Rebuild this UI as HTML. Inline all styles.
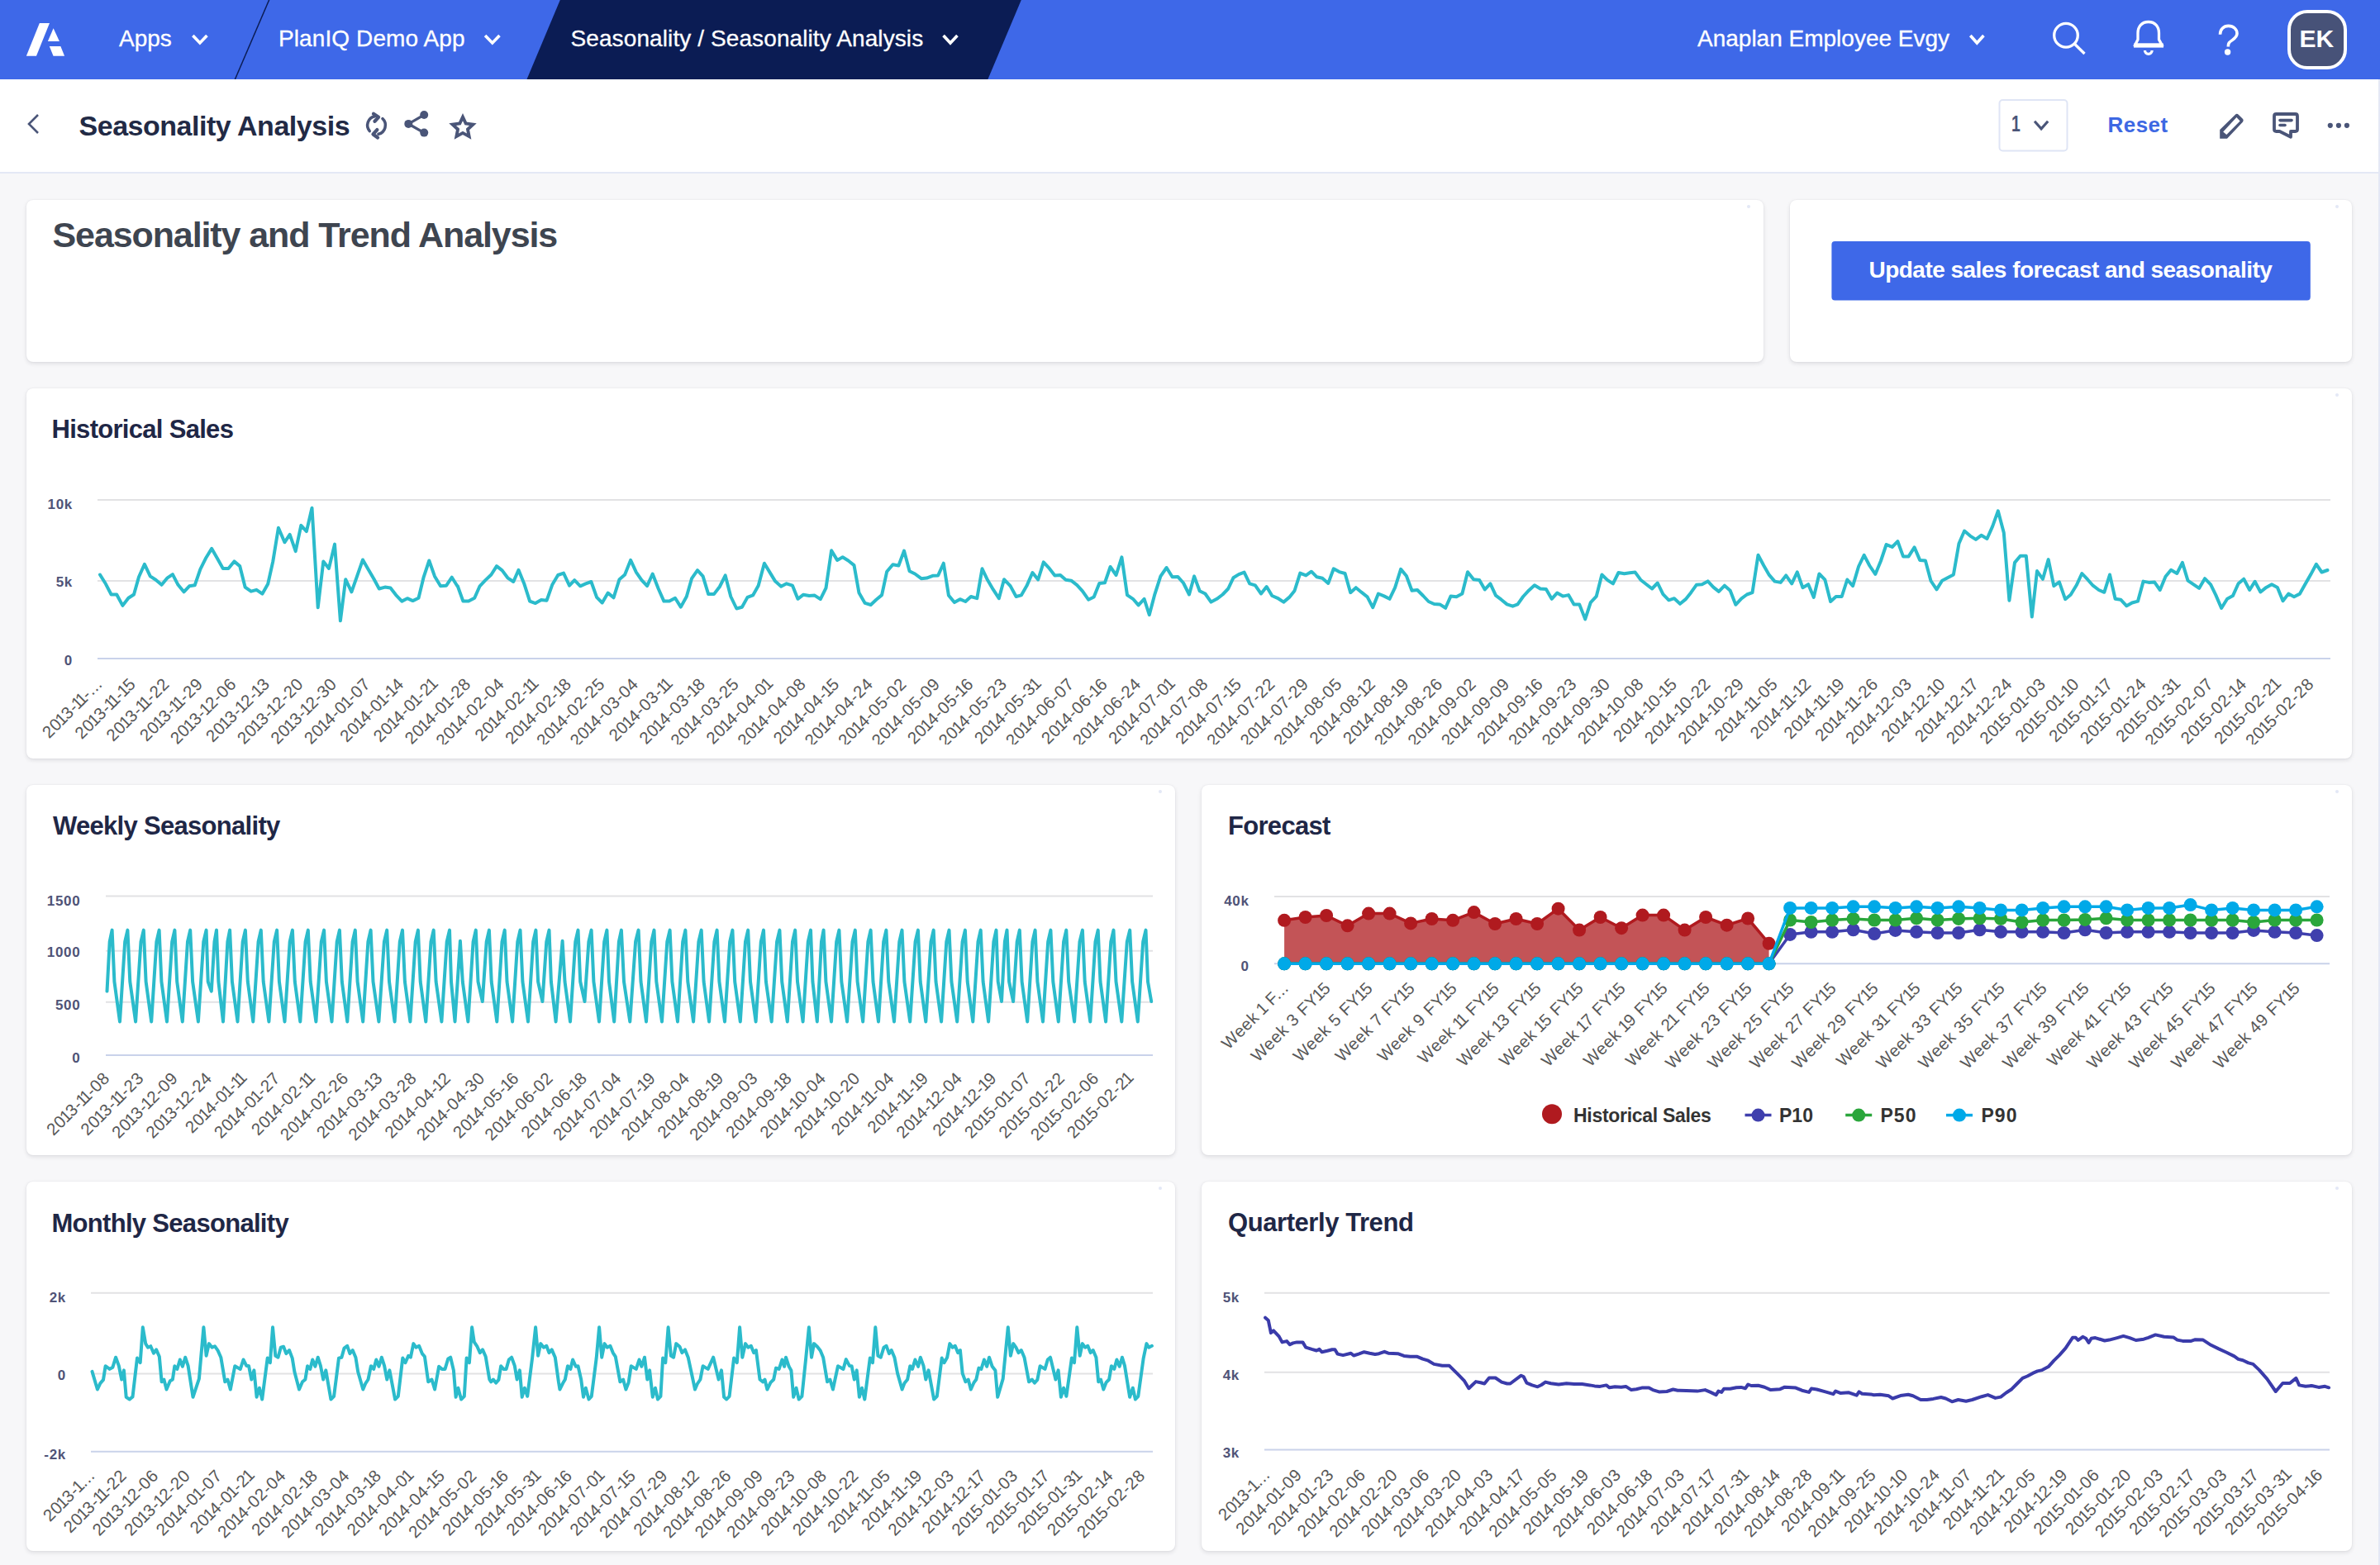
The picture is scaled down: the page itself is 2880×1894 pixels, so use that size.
<!DOCTYPE html><html><head><meta charset="utf-8"><style>
html,body{margin:0;padding:0}
body{width:2880px;height:1894px;overflow:hidden;position:relative;background:#F7F7F9;font-family:"Liberation Sans", sans-serif}
.card{position:absolute;background:#fff;border-radius:8px;box-shadow:0 2px 5px rgba(30,32,50,0.12),0 0 2px rgba(30,32,50,0.07)}
.dot{position:absolute;width:4.4px;height:4.4px;border-radius:50%;background:#E3E8F6}
</style></head><body>
<div style="position:absolute;left:0;top:0;width:2880px;height:96px;background:#3E68E8"></div>
<div style="position:absolute;left:0;top:96px;width:2880px;height:112px;background:#fff;border-bottom:2px solid #E4E8F5"></div>
<div style="position:absolute;left:2878px;top:96px;width:2px;height:1798px;background:#E4E8F5"></div>
<div class="card" style="left:32px;top:242px;width:2102px;height:196px"></div>
<div class="dot" style="left:2113.5px;top:247.5px"></div>
<div class="card" style="left:2166px;top:242px;width:680px;height:196px"></div>
<div class="dot" style="left:2825.5px;top:247.5px"></div>
<div class="card" style="left:32px;top:470px;width:2814px;height:448px"></div>
<div class="dot" style="left:2825.5px;top:475.5px"></div>
<div class="card" style="left:32px;top:950px;width:1390px;height:448px"></div>
<div class="dot" style="left:1401.5px;top:955.5px"></div>
<div class="card" style="left:1454px;top:950px;width:1392px;height:448px"></div>
<div class="dot" style="left:2825.5px;top:955.5px"></div>
<div class="card" style="left:32px;top:1430px;width:1390px;height:447px"></div>
<div class="dot" style="left:1401.5px;top:1435.5px"></div>
<div class="card" style="left:1454px;top:1430px;width:1392px;height:447px"></div>
<div class="dot" style="left:2825.5px;top:1435.5px"></div>
<svg style="position:absolute;left:0;top:0" width="2880" height="1894" viewBox="0 0 2880 1894"><g fill="#fff"><polygon points="31.85,67.87 43.98,67.87 59.97,28.01 47.85,28.01"/><polygon points="64.65,34.24 57.86,49.88 71.92,49.88"/><polygon points="59.8,55.92 73.33,55.92 78.08,67.87 64.54,67.87"/></g><polygon points="324.8,0 326.4,0 285.2,96 283.6,96" fill="#0B1C54"/><polygon points="677.8,0 1235.8,0 1195.4,96 637.5,96" fill="#0B1C54"/><polyline points="234.6,44.3 241.9,52.0 249.2,44.3" fill="none" stroke="#fff" stroke-width="3.6" stroke-linecap="square" stroke-linejoin="miter"/><polyline points="588.3,44.3 595.8,52.0 603.2,44.3" fill="none" stroke="#fff" stroke-width="3.6" stroke-linecap="square" stroke-linejoin="miter"/><polyline points="1142.8,44.3 1150.0,52.0 1157.2,44.3" fill="none" stroke="#fff" stroke-width="3.6" stroke-linecap="square" stroke-linejoin="miter"/><polyline points="2385.5,44.3 2392.3,52.0 2399.2,44.3" fill="none" stroke="#fff" stroke-width="3.6" stroke-linecap="square" stroke-linejoin="miter"/><circle cx="2500" cy="42.75" r="14.3" fill="none" stroke="#fff" stroke-width="3.3"/><line x1="2510.5" y1="53.3" x2="2522.5" y2="65" stroke="#fff" stroke-width="3.3"/><path d="M2599.75,26.5 C2591.5,26.5 2587,32.5 2587,40 L2587,47.8 L2583.8,54.2 L2615.9,54.2 L2612.5,47.8 L2612.5,40 C2612.5,32.5 2608,26.5 2599.75,26.5 Z" fill="none" stroke="#fff" stroke-width="3.3" stroke-linejoin="miter"/><path d="M2595.5,61 A4.3,4.3 0 0 0 2604.1,61" fill="none" stroke="#fff" stroke-width="3.3"/><rect x="2582" y="52.6" width="36" height="5" fill="#fff"/><path d="M2686.5,41.8 C2686.5,35.5 2690.8,31.4 2696.6,31.4 C2702.6,31.4 2707,35.3 2707,40.6 C2707,46.8 2700.2,48.2 2697.3,51.8 C2696.4,53 2696.3,54.6 2696.3,56.6" fill="none" stroke="#fff" stroke-width="3.6"/><circle cx="2695.6" cy="63" r="3.7" fill="#fff"/><polyline points="46,139 35,150 46,161" fill="none" stroke="#4A5578" stroke-width="2.6"/><g fill="none" stroke="#4A5578" stroke-width="3.5" stroke-linecap="round" stroke-linejoin="round"><path d="M447.3,158.6 A11,11 0 0 1 453.5,140.7"/><polyline stroke-width="4.3" points="452,137.8 458,141.9 453.5,146.8"/><path d="M462.9,143.6 A11,11 0 0 1 457.9,162.3"/><polyline stroke-width="4.3" points="456.3,157.1 451.5,162.4 457,166.4"/></g><g fill="#4A5578"><circle cx="513.2" cy="139" r="5"/><circle cx="494.3" cy="149.9" r="5"/><circle cx="513.2" cy="160.6" r="5"/></g><polyline points="513.2,139 494.3,149.9 513.2,160.6" fill="none" stroke="#4A5578" stroke-width="3.2"/><polygon points="560.00,141.60 563.70,149.50 572.36,150.58 565.99,156.55 567.64,165.12 560.00,160.90 552.36,165.12 554.01,156.55 547.64,150.58 556.30,149.50" fill="none" stroke="#4A5578" stroke-width="3.9" stroke-linejoin="miter" stroke-miterlimit="10"/><rect x="2419.5" y="121" width="82" height="61.5" rx="4" fill="#fff" stroke="#DFE5F5" stroke-width="2"/><polyline points="2463.1,148.0 2470.1,155.9 2477.1,148.0" fill="none" stroke="#4A5578" stroke-width="3.2" stroke-linecap="square" stroke-linejoin="miter"/><path fill-rule="evenodd" fill="#4A5578" d="M2686.2,167.7 L2686.2,157.1 L2704.6,138.9 Q2706.8,136.8 2709,138.9 L2713.6,143.5 Q2715.7,145.7 2713.6,147.9 L2695,167.7 Z M2690.2,159.5 L2694.3,163 L2710.6,146.6 L2706.4,142.1 Z"/><path d="M2754.5,138 L2777.5,138 Q2780,138 2780,140.5 L2780,156.5 Q2780,159 2777.5,159 L2772,159 L2772,165.8 L2758.6,159 L2754.5,159 Q2752,159 2752,156.5 L2752,140.5 Q2752,138 2754.5,138 Z" fill="none" stroke="#4A5578" stroke-width="3.8" stroke-linejoin="round"/><g stroke="#4A5578" stroke-width="3.6" stroke-linecap="round"><line x1="2759" y1="145.6" x2="2773" y2="145.6"/><line x1="2759" y1="151.5" x2="2765" y2="151.5"/></g><g fill="#4A5578"><circle cx="2819.8" cy="151.8" r="3.1"/><circle cx="2829.9" cy="151.8" r="3.1"/><circle cx="2839.9" cy="151.8" r="3.1"/></g><rect x="2216.4" y="292.1" width="579.4" height="71.5" rx="4" fill="#3E68E8"/><defs><clipPath id="c1"><rect x="32" y="805" width="2814" height="96"/></clipPath><clipPath id="c2"><rect x="32" y="1285" width="1390" height="97"/></clipPath><clipPath id="c3"><rect x="32" y="1765" width="1390" height="97"/></clipPath><clipPath id="c4"><rect x="1454" y="1765" width="1392" height="97"/></clipPath></defs><line x1="118" y1="605" x2="2820" y2="605" stroke="#E2E2E4" stroke-width="2"/><line x1="118" y1="703" x2="2820" y2="703" stroke="#E2E2E4" stroke-width="2"/><line x1="118" y1="797" x2="2820" y2="797" stroke="#C9D2EA" stroke-width="2"/><text x="88" y="616.4" text-anchor="end" font-family='"Liberation Sans", sans-serif' font-weight="700" font-size="17" letter-spacing="0.7" fill="#4F5377">10k</text><text x="88" y="709.9" text-anchor="end" font-family='"Liberation Sans", sans-serif' font-weight="700" font-size="17" letter-spacing="0.7" fill="#4F5377">5k</text><text x="88" y="805.4" text-anchor="end" font-family='"Liberation Sans", sans-serif' font-weight="700" font-size="17" letter-spacing="0.7" fill="#4F5377">0</text><polyline points="121.0,695.5 128.0,706.8 134.6,719.5 141.2,719.5 148.4,732.9 155.4,723.8 162.0,719.5 168.0,698.3 174.9,682.8 181.8,697.4 188.5,701.7 195.6,707.8 202.6,699.3 208.9,695.1 215.5,707.8 222.5,716.3 229.1,709.3 235.7,708.3 242.4,688.9 249.5,674.7 256.2,663.9 262.8,675.6 269.8,687.9 276.4,687.9 283.4,679.4 290.2,685.1 296.6,710.6 303.8,715.7 310.4,713.8 317.4,718.7 324.2,706.8 330.3,679.4 336.9,638.8 344.4,656.3 350.7,646.9 357.7,667.1 364.3,635.9 370.9,643.1 377.5,614.7 384.7,735.2 391.3,679.4 398.0,687.9 405.0,658.6 411.9,751.3 418.2,701.2 425.4,716.3 432.4,696.4 439.0,677.5 445.6,688.9 452.2,700.2 458.8,712.5 465.8,710.6 472.5,711.6 479.1,720.1 486.3,727.6 492.9,724.2 499.5,727.1 506.5,723.8 512.7,698.3 519.3,678.5 526.0,697.4 533.1,709.3 540.1,708.7 546.8,698.7 553.4,709.3 553.8,709.3 560.4,727.6 567.0,727.6 574.2,723.8 580.6,709.3 587.4,702.1 594.4,695.5 601.0,685.1 607.7,690.4 614.3,699.3 621.3,704.0 627.5,689.8 634.1,705.9 641.1,727.6 647.9,730.1 654.9,726.1 661.6,726.7 668.2,707.8 675.2,696.0 682.0,693.6 689.0,708.7 695.2,702.1 702.2,709.3 708.8,706.4 715.4,704.0 722.1,722.9 728.7,729.5 735.7,717.6 742.5,723.3 749.5,701.2 756.1,695.5 763.1,677.9 769.9,692.6 776.5,702.1 783.1,709.1 789.7,694.5 796.7,712.5 803.4,727.6 810.0,727.6 817.0,723.8 823.8,734.6 830.8,722.0 837.0,700.2 844.0,690.2 850.6,697.4 857.2,719.1 863.9,719.1 870.9,710.0 877.7,696.4 884.3,722.0 891.3,736.5 897.9,734.8 904.5,722.9 911.1,720.4 917.7,708.7 924.9,681.7 931.5,692.6 938.2,703.6 945.2,709.7 951.8,706.3 959.0,708.7 965.4,724.8 972.2,719.7 979.2,721.0 985.8,720.6 992.8,725.2 999.5,711.6 1006.1,666.2 1013.1,677.9 1019.7,674.3 1026.5,678.5 1033.5,684.1 1039.5,717.6 1046.7,729.9 1053.7,732.0 1060.3,725.7 1067.1,720.1 1073.2,691.7 1080.4,683.2 1087.4,684.5 1094.0,666.6 1100.6,691.3 1107.2,694.5 1114.8,700.2 1121.4,699.6 1128.6,696.8 1135.2,696.4 1141.8,681.7 1147.9,720.4 1154.9,729.1 1161.7,725.2 1168.3,728.0 1174.9,722.0 1182.3,724.2 1188.5,688.3 1195.1,702.1 1201.8,713.4 1208.8,724.2 1215.0,701.2 1222.6,709.1 1229.6,722.0 1235.8,720.4 1242.4,709.1 1249.4,693.0 1256.2,701.5 1262.8,680.4 1269.8,687.9 1276.4,696.4 1283.1,695.9 1289.7,701.7 1296.3,702.7 1303.3,708.1 1309.9,715.3 1317.1,725.7 1323.7,722.5 1330.3,705.9 1336.9,705.3 1343.6,686.0 1350.6,696.0 1357.4,674.3 1364.0,720.1 1371.0,724.8 1377.6,732.4 1384.6,724.8 1390.8,744.1 1397.4,719.1 1404.4,697.4 1411.6,687.0 1418.6,698.3 1425.2,697.9 1432.0,705.5 1439.0,719.5 1445.1,697.4 1451.7,715.3 1458.4,718.5 1465.5,728.6 1472.5,724.8 1479.5,719.5 1486.2,712.5 1492.4,699.3 1499.0,695.1 1505.6,692.6 1512.2,706.4 1518.9,708.3 1526.0,718.5 1532.7,710.0 1539.3,721.0 1545.9,723.8 1553.3,728.6 1560.1,722.9 1566.5,715.0 1573.3,693.6 1580.3,696.4 1586.9,691.7 1593.5,698.3 1600.2,699.8 1607.3,705.9 1613.8,688.3 1620.6,692.1 1627.6,694.0 1634.2,717.2 1640.8,711.2 1647.4,716.7 1654.6,722.3 1661.2,735.2 1667.9,718.5 1674.8,721.4 1681.5,724.8 1688.1,711.2 1695.1,688.9 1701.9,697.0 1708.5,714.8 1715.1,714.0 1722.1,721.0 1728.7,728.0 1735.4,731.0 1742.3,731.4 1749.2,735.8 1755.6,721.4 1762.4,722.3 1769.4,718.5 1776.0,692.3 1783.2,701.2 1790.2,702.1 1796.8,713.4 1803.4,706.4 1810.0,720.6 1816.7,725.7 1823.6,731.4 1830.5,733.7 1836.5,731.4 1843.1,722.0 1850.1,714.4 1856.9,708.3 1863.9,712.5 1870.9,712.9 1877.7,724.8 1884.2,717.6 1891.2,721.6 1898.0,720.1 1904.6,731.4 1911.2,731.4 1918.2,749.4 1924.8,729.1 1931.8,721.6 1938.4,695.5 1945.3,702.1 1951.9,706.4 1958.5,693.0 1965.5,694.2 1972.1,693.2 1978.7,692.6 1985.3,701.7 1992.3,707.2 1999.1,712.5 2005.8,705.5 2012.4,719.1 2019.4,726.3 2026.0,724.2 2033.0,730.8 2039.6,725.4 2046.2,717.2 2052.8,707.8 2059.6,707.2 2066.6,703.4 2073.3,710.6 2079.9,715.9 2086.9,708.7 2093.7,714.8 2100.3,731.8 2107.3,724.4 2113.9,719.5 2120.5,717.2 2127.5,671.8 2134.3,684.5 2140.9,695.9 2147.6,703.6 2154.6,704.9 2161.2,696.4 2168.2,706.4 2174.8,692.3 2181.4,711.2 2188.2,707.2 2194.8,722.9 2201.4,694.5 2208.4,701.7 2215.1,728.0 2221.7,722.0 2228.7,722.0 2235.3,701.5 2242.1,709.1 2249.1,685.5 2255.7,671.8 2262.3,684.5 2269.3,694.9 2275.9,679.0 2282.6,659.0 2289.7,662.0 2296.4,655.2 2303.0,673.4 2309.6,673.4 2316.6,662.4 2323.2,677.9 2329.9,678.5 2336.5,703.0 2343.5,713.4 2350.1,702.7 2356.7,699.3 2363.9,695.5 2370.5,657.7 2377.1,642.5 2384.1,648.6 2390.9,652.9 2397.5,647.8 2404.5,652.0 2411.2,636.9 2417.8,618.3 2424.8,644.8 2431.4,726.7 2438.0,680.9 2444.8,672.8 2451.8,672.8 2458.8,746.5 2465.0,691.1 2472.0,700.8 2478.7,677.1 2485.3,709.1 2491.9,704.4 2499.1,725.2 2505.7,719.7 2512.7,708.3 2519.3,694.0 2526.1,701.2 2532.7,708.7 2539.7,714.0 2546.3,716.8 2553.0,695.5 2559.6,724.8 2566.2,725.7 2573.4,733.3 2580.0,729.5 2587.0,727.6 2593.6,703.6 2600.2,704.9 2607.2,704.6 2613.8,714.0 2620.5,697.8 2627.1,689.8 2634.3,694.0 2640.9,680.9 2647.5,702.7 2654.1,707.2 2661.1,711.9 2668.0,700.2 2675.1,707.3 2681.3,720.1 2688.1,736.0 2695.1,724.7 2701.9,721.1 2708.6,706.3 2715.2,700.7 2722.2,714.0 2728.6,703.8 2735.4,716.5 2742.3,710.9 2749.0,707.3 2755.9,710.9 2762.5,727.3 2769.2,718.6 2776.0,722.2 2783.0,718.6 2789.6,706.8 2796.3,695.1 2802.9,682.8 2809.5,692.5 2816.5,690.0" fill="none" stroke="#2BBBCB" stroke-width="4" stroke-linejoin="round" stroke-linecap="round"/><g clip-path="url(#c1)"><text transform="translate(125.0,829.0) rotate(-45)" text-anchor="end" font-family='"Liberation Sans", sans-serif' font-size="20.5" letter-spacing="0.55" fill="#585858">20<tspan dx="-1.85" letter-spacing="-1.30">1</tspan>3-<tspan dx="-1.85" letter-spacing="-1.30">1</tspan><tspan dx="-1.85" letter-spacing="-1.30">1</tspan>-...</text><text transform="translate(165.5,829.0) rotate(-45)" text-anchor="end" font-family='"Liberation Sans", sans-serif' font-size="20.5" letter-spacing="0.55" fill="#585858">20<tspan dx="-1.85" letter-spacing="-1.30">1</tspan>3-<tspan dx="-1.85" letter-spacing="-1.30">1</tspan><tspan dx="-1.85" letter-spacing="-1.30">1</tspan>-<tspan dx="-1.85" letter-spacing="-1.30">1</tspan>5</text><text transform="translate(206.1,829.0) rotate(-45)" text-anchor="end" font-family='"Liberation Sans", sans-serif' font-size="20.5" letter-spacing="0.55" fill="#585858">20<tspan dx="-1.85" letter-spacing="-1.30">1</tspan>3-<tspan dx="-1.85" letter-spacing="-1.30">1</tspan><tspan dx="-1.85" letter-spacing="-1.30">1</tspan>-22</text><text transform="translate(246.6,829.0) rotate(-45)" text-anchor="end" font-family='"Liberation Sans", sans-serif' font-size="20.5" letter-spacing="0.55" fill="#585858">20<tspan dx="-1.85" letter-spacing="-1.30">1</tspan>3-<tspan dx="-1.85" letter-spacing="-1.30">1</tspan><tspan dx="-1.85" letter-spacing="-1.30">1</tspan>-29</text><text transform="translate(287.2,829.0) rotate(-45)" text-anchor="end" font-family='"Liberation Sans", sans-serif' font-size="20.5" letter-spacing="0.55" fill="#585858">20<tspan dx="-1.85" letter-spacing="-1.30">1</tspan>3-<tspan dx="-1.85" letter-spacing="-1.30">1</tspan>2-06</text><text transform="translate(327.7,829.0) rotate(-45)" text-anchor="end" font-family='"Liberation Sans", sans-serif' font-size="20.5" letter-spacing="0.55" fill="#585858">20<tspan dx="-1.85" letter-spacing="-1.30">1</tspan>3-<tspan dx="-1.85" letter-spacing="-1.30">1</tspan>2-<tspan dx="-1.85" letter-spacing="-1.30">1</tspan>3</text><text transform="translate(368.3,829.0) rotate(-45)" text-anchor="end" font-family='"Liberation Sans", sans-serif' font-size="20.5" letter-spacing="0.55" fill="#585858">20<tspan dx="-1.85" letter-spacing="-1.30">1</tspan>3-<tspan dx="-1.85" letter-spacing="-1.30">1</tspan>2-20</text><text transform="translate(408.8,829.0) rotate(-45)" text-anchor="end" font-family='"Liberation Sans", sans-serif' font-size="20.5" letter-spacing="0.55" fill="#585858">20<tspan dx="-1.85" letter-spacing="-1.30">1</tspan>3-<tspan dx="-1.85" letter-spacing="-1.30">1</tspan>2-30</text><text transform="translate(449.4,829.0) rotate(-45)" text-anchor="end" font-family='"Liberation Sans", sans-serif' font-size="20.5" letter-spacing="0.55" fill="#585858">20<tspan dx="-1.85" letter-spacing="-1.30">1</tspan>4-0<tspan dx="-1.85" letter-spacing="-1.30">1</tspan>-07</text><text transform="translate(489.9,829.0) rotate(-45)" text-anchor="end" font-family='"Liberation Sans", sans-serif' font-size="20.5" letter-spacing="0.55" fill="#585858">20<tspan dx="-1.85" letter-spacing="-1.30">1</tspan>4-0<tspan dx="-1.85" letter-spacing="-1.30">1</tspan>-<tspan dx="-1.85" letter-spacing="-1.30">1</tspan>4</text><text transform="translate(530.5,829.0) rotate(-45)" text-anchor="end" font-family='"Liberation Sans", sans-serif' font-size="20.5" letter-spacing="0.55" fill="#585858">20<tspan dx="-1.85" letter-spacing="-1.30">1</tspan>4-0<tspan dx="-1.85" letter-spacing="-1.30">1</tspan>-2<tspan dx="-1.85" letter-spacing="-1.30">1</tspan></text><text transform="translate(571.0,829.0) rotate(-45)" text-anchor="end" font-family='"Liberation Sans", sans-serif' font-size="20.5" letter-spacing="0.55" fill="#585858">20<tspan dx="-1.85" letter-spacing="-1.30">1</tspan>4-0<tspan dx="-1.85" letter-spacing="-1.30">1</tspan>-28</text><text transform="translate(611.5,829.0) rotate(-45)" text-anchor="end" font-family='"Liberation Sans", sans-serif' font-size="20.5" letter-spacing="0.55" fill="#585858">20<tspan dx="-1.85" letter-spacing="-1.30">1</tspan>4-02-04</text><text transform="translate(652.1,829.0) rotate(-45)" text-anchor="end" font-family='"Liberation Sans", sans-serif' font-size="20.5" letter-spacing="0.55" fill="#585858">20<tspan dx="-1.85" letter-spacing="-1.30">1</tspan>4-02-<tspan dx="-1.85" letter-spacing="-1.30">1</tspan><tspan dx="-1.85" letter-spacing="-1.30">1</tspan></text><text transform="translate(692.6,829.0) rotate(-45)" text-anchor="end" font-family='"Liberation Sans", sans-serif' font-size="20.5" letter-spacing="0.55" fill="#585858">20<tspan dx="-1.85" letter-spacing="-1.30">1</tspan>4-02-<tspan dx="-1.85" letter-spacing="-1.30">1</tspan>8</text><text transform="translate(733.2,829.0) rotate(-45)" text-anchor="end" font-family='"Liberation Sans", sans-serif' font-size="20.5" letter-spacing="0.55" fill="#585858">20<tspan dx="-1.85" letter-spacing="-1.30">1</tspan>4-02-25</text><text transform="translate(773.7,829.0) rotate(-45)" text-anchor="end" font-family='"Liberation Sans", sans-serif' font-size="20.5" letter-spacing="0.55" fill="#585858">20<tspan dx="-1.85" letter-spacing="-1.30">1</tspan>4-03-04</text><text transform="translate(814.3,829.0) rotate(-45)" text-anchor="end" font-family='"Liberation Sans", sans-serif' font-size="20.5" letter-spacing="0.55" fill="#585858">20<tspan dx="-1.85" letter-spacing="-1.30">1</tspan>4-03-<tspan dx="-1.85" letter-spacing="-1.30">1</tspan><tspan dx="-1.85" letter-spacing="-1.30">1</tspan></text><text transform="translate(854.8,829.0) rotate(-45)" text-anchor="end" font-family='"Liberation Sans", sans-serif' font-size="20.5" letter-spacing="0.55" fill="#585858">20<tspan dx="-1.85" letter-spacing="-1.30">1</tspan>4-03-<tspan dx="-1.85" letter-spacing="-1.30">1</tspan>8</text><text transform="translate(895.4,829.0) rotate(-45)" text-anchor="end" font-family='"Liberation Sans", sans-serif' font-size="20.5" letter-spacing="0.55" fill="#585858">20<tspan dx="-1.85" letter-spacing="-1.30">1</tspan>4-03-25</text><text transform="translate(935.9,829.0) rotate(-45)" text-anchor="end" font-family='"Liberation Sans", sans-serif' font-size="20.5" letter-spacing="0.55" fill="#585858">20<tspan dx="-1.85" letter-spacing="-1.30">1</tspan>4-04-0<tspan dx="-1.85" letter-spacing="-1.30">1</tspan></text><text transform="translate(976.5,829.0) rotate(-45)" text-anchor="end" font-family='"Liberation Sans", sans-serif' font-size="20.5" letter-spacing="0.55" fill="#585858">20<tspan dx="-1.85" letter-spacing="-1.30">1</tspan>4-04-08</text><text transform="translate(1017.0,829.0) rotate(-45)" text-anchor="end" font-family='"Liberation Sans", sans-serif' font-size="20.5" letter-spacing="0.55" fill="#585858">20<tspan dx="-1.85" letter-spacing="-1.30">1</tspan>4-04-<tspan dx="-1.85" letter-spacing="-1.30">1</tspan>5</text><text transform="translate(1057.6,829.0) rotate(-45)" text-anchor="end" font-family='"Liberation Sans", sans-serif' font-size="20.5" letter-spacing="0.55" fill="#585858">20<tspan dx="-1.85" letter-spacing="-1.30">1</tspan>4-04-24</text><text transform="translate(1098.1,829.0) rotate(-45)" text-anchor="end" font-family='"Liberation Sans", sans-serif' font-size="20.5" letter-spacing="0.55" fill="#585858">20<tspan dx="-1.85" letter-spacing="-1.30">1</tspan>4-05-02</text><text transform="translate(1138.7,829.0) rotate(-45)" text-anchor="end" font-family='"Liberation Sans", sans-serif' font-size="20.5" letter-spacing="0.55" fill="#585858">20<tspan dx="-1.85" letter-spacing="-1.30">1</tspan>4-05-09</text><text transform="translate(1179.2,829.0) rotate(-45)" text-anchor="end" font-family='"Liberation Sans", sans-serif' font-size="20.5" letter-spacing="0.55" fill="#585858">20<tspan dx="-1.85" letter-spacing="-1.30">1</tspan>4-05-<tspan dx="-1.85" letter-spacing="-1.30">1</tspan>6</text><text transform="translate(1219.8,829.0) rotate(-45)" text-anchor="end" font-family='"Liberation Sans", sans-serif' font-size="20.5" letter-spacing="0.55" fill="#585858">20<tspan dx="-1.85" letter-spacing="-1.30">1</tspan>4-05-23</text><text transform="translate(1260.3,829.0) rotate(-45)" text-anchor="end" font-family='"Liberation Sans", sans-serif' font-size="20.5" letter-spacing="0.55" fill="#585858">20<tspan dx="-1.85" letter-spacing="-1.30">1</tspan>4-05-3<tspan dx="-1.85" letter-spacing="-1.30">1</tspan></text><text transform="translate(1300.9,829.0) rotate(-45)" text-anchor="end" font-family='"Liberation Sans", sans-serif' font-size="20.5" letter-spacing="0.55" fill="#585858">20<tspan dx="-1.85" letter-spacing="-1.30">1</tspan>4-06-07</text><text transform="translate(1341.4,829.0) rotate(-45)" text-anchor="end" font-family='"Liberation Sans", sans-serif' font-size="20.5" letter-spacing="0.55" fill="#585858">20<tspan dx="-1.85" letter-spacing="-1.30">1</tspan>4-06-<tspan dx="-1.85" letter-spacing="-1.30">1</tspan>6</text><text transform="translate(1382.0,829.0) rotate(-45)" text-anchor="end" font-family='"Liberation Sans", sans-serif' font-size="20.5" letter-spacing="0.55" fill="#585858">20<tspan dx="-1.85" letter-spacing="-1.30">1</tspan>4-06-24</text><text transform="translate(1422.5,829.0) rotate(-45)" text-anchor="end" font-family='"Liberation Sans", sans-serif' font-size="20.5" letter-spacing="0.55" fill="#585858">20<tspan dx="-1.85" letter-spacing="-1.30">1</tspan>4-07-0<tspan dx="-1.85" letter-spacing="-1.30">1</tspan></text><text transform="translate(1463.1,829.0) rotate(-45)" text-anchor="end" font-family='"Liberation Sans", sans-serif' font-size="20.5" letter-spacing="0.55" fill="#585858">20<tspan dx="-1.85" letter-spacing="-1.30">1</tspan>4-07-08</text><text transform="translate(1503.6,829.0) rotate(-45)" text-anchor="end" font-family='"Liberation Sans", sans-serif' font-size="20.5" letter-spacing="0.55" fill="#585858">20<tspan dx="-1.85" letter-spacing="-1.30">1</tspan>4-07-<tspan dx="-1.85" letter-spacing="-1.30">1</tspan>5</text><text transform="translate(1544.2,829.0) rotate(-45)" text-anchor="end" font-family='"Liberation Sans", sans-serif' font-size="20.5" letter-spacing="0.55" fill="#585858">20<tspan dx="-1.85" letter-spacing="-1.30">1</tspan>4-07-22</text><text transform="translate(1584.7,829.0) rotate(-45)" text-anchor="end" font-family='"Liberation Sans", sans-serif' font-size="20.5" letter-spacing="0.55" fill="#585858">20<tspan dx="-1.85" letter-spacing="-1.30">1</tspan>4-07-29</text><text transform="translate(1625.2,829.0) rotate(-45)" text-anchor="end" font-family='"Liberation Sans", sans-serif' font-size="20.5" letter-spacing="0.55" fill="#585858">20<tspan dx="-1.85" letter-spacing="-1.30">1</tspan>4-08-05</text><text transform="translate(1665.8,829.0) rotate(-45)" text-anchor="end" font-family='"Liberation Sans", sans-serif' font-size="20.5" letter-spacing="0.55" fill="#585858">20<tspan dx="-1.85" letter-spacing="-1.30">1</tspan>4-08-<tspan dx="-1.85" letter-spacing="-1.30">1</tspan>2</text><text transform="translate(1706.3,829.0) rotate(-45)" text-anchor="end" font-family='"Liberation Sans", sans-serif' font-size="20.5" letter-spacing="0.55" fill="#585858">20<tspan dx="-1.85" letter-spacing="-1.30">1</tspan>4-08-<tspan dx="-1.85" letter-spacing="-1.30">1</tspan>9</text><text transform="translate(1746.9,829.0) rotate(-45)" text-anchor="end" font-family='"Liberation Sans", sans-serif' font-size="20.5" letter-spacing="0.55" fill="#585858">20<tspan dx="-1.85" letter-spacing="-1.30">1</tspan>4-08-26</text><text transform="translate(1787.4,829.0) rotate(-45)" text-anchor="end" font-family='"Liberation Sans", sans-serif' font-size="20.5" letter-spacing="0.55" fill="#585858">20<tspan dx="-1.85" letter-spacing="-1.30">1</tspan>4-09-02</text><text transform="translate(1828.0,829.0) rotate(-45)" text-anchor="end" font-family='"Liberation Sans", sans-serif' font-size="20.5" letter-spacing="0.55" fill="#585858">20<tspan dx="-1.85" letter-spacing="-1.30">1</tspan>4-09-09</text><text transform="translate(1868.5,829.0) rotate(-45)" text-anchor="end" font-family='"Liberation Sans", sans-serif' font-size="20.5" letter-spacing="0.55" fill="#585858">20<tspan dx="-1.85" letter-spacing="-1.30">1</tspan>4-09-<tspan dx="-1.85" letter-spacing="-1.30">1</tspan>6</text><text transform="translate(1909.1,829.0) rotate(-45)" text-anchor="end" font-family='"Liberation Sans", sans-serif' font-size="20.5" letter-spacing="0.55" fill="#585858">20<tspan dx="-1.85" letter-spacing="-1.30">1</tspan>4-09-23</text><text transform="translate(1949.6,829.0) rotate(-45)" text-anchor="end" font-family='"Liberation Sans", sans-serif' font-size="20.5" letter-spacing="0.55" fill="#585858">20<tspan dx="-1.85" letter-spacing="-1.30">1</tspan>4-09-30</text><text transform="translate(1990.2,829.0) rotate(-45)" text-anchor="end" font-family='"Liberation Sans", sans-serif' font-size="20.5" letter-spacing="0.55" fill="#585858">20<tspan dx="-1.85" letter-spacing="-1.30">1</tspan>4-<tspan dx="-1.85" letter-spacing="-1.30">1</tspan>0-08</text><text transform="translate(2030.7,829.0) rotate(-45)" text-anchor="end" font-family='"Liberation Sans", sans-serif' font-size="20.5" letter-spacing="0.55" fill="#585858">20<tspan dx="-1.85" letter-spacing="-1.30">1</tspan>4-<tspan dx="-1.85" letter-spacing="-1.30">1</tspan>0-<tspan dx="-1.85" letter-spacing="-1.30">1</tspan>5</text><text transform="translate(2071.3,829.0) rotate(-45)" text-anchor="end" font-family='"Liberation Sans", sans-serif' font-size="20.5" letter-spacing="0.55" fill="#585858">20<tspan dx="-1.85" letter-spacing="-1.30">1</tspan>4-<tspan dx="-1.85" letter-spacing="-1.30">1</tspan>0-22</text><text transform="translate(2111.8,829.0) rotate(-45)" text-anchor="end" font-family='"Liberation Sans", sans-serif' font-size="20.5" letter-spacing="0.55" fill="#585858">20<tspan dx="-1.85" letter-spacing="-1.30">1</tspan>4-<tspan dx="-1.85" letter-spacing="-1.30">1</tspan>0-29</text><text transform="translate(2152.4,829.0) rotate(-45)" text-anchor="end" font-family='"Liberation Sans", sans-serif' font-size="20.5" letter-spacing="0.55" fill="#585858">20<tspan dx="-1.85" letter-spacing="-1.30">1</tspan>4-<tspan dx="-1.85" letter-spacing="-1.30">1</tspan><tspan dx="-1.85" letter-spacing="-1.30">1</tspan>-05</text><text transform="translate(2192.9,829.0) rotate(-45)" text-anchor="end" font-family='"Liberation Sans", sans-serif' font-size="20.5" letter-spacing="0.55" fill="#585858">20<tspan dx="-1.85" letter-spacing="-1.30">1</tspan>4-<tspan dx="-1.85" letter-spacing="-1.30">1</tspan><tspan dx="-1.85" letter-spacing="-1.30">1</tspan>-<tspan dx="-1.85" letter-spacing="-1.30">1</tspan>2</text><text transform="translate(2233.5,829.0) rotate(-45)" text-anchor="end" font-family='"Liberation Sans", sans-serif' font-size="20.5" letter-spacing="0.55" fill="#585858">20<tspan dx="-1.85" letter-spacing="-1.30">1</tspan>4-<tspan dx="-1.85" letter-spacing="-1.30">1</tspan><tspan dx="-1.85" letter-spacing="-1.30">1</tspan>-<tspan dx="-1.85" letter-spacing="-1.30">1</tspan>9</text><text transform="translate(2274.0,829.0) rotate(-45)" text-anchor="end" font-family='"Liberation Sans", sans-serif' font-size="20.5" letter-spacing="0.55" fill="#585858">20<tspan dx="-1.85" letter-spacing="-1.30">1</tspan>4-<tspan dx="-1.85" letter-spacing="-1.30">1</tspan><tspan dx="-1.85" letter-spacing="-1.30">1</tspan>-26</text><text transform="translate(2314.6,829.0) rotate(-45)" text-anchor="end" font-family='"Liberation Sans", sans-serif' font-size="20.5" letter-spacing="0.55" fill="#585858">20<tspan dx="-1.85" letter-spacing="-1.30">1</tspan>4-<tspan dx="-1.85" letter-spacing="-1.30">1</tspan>2-03</text><text transform="translate(2355.1,829.0) rotate(-45)" text-anchor="end" font-family='"Liberation Sans", sans-serif' font-size="20.5" letter-spacing="0.55" fill="#585858">20<tspan dx="-1.85" letter-spacing="-1.30">1</tspan>4-<tspan dx="-1.85" letter-spacing="-1.30">1</tspan>2-<tspan dx="-1.85" letter-spacing="-1.30">1</tspan>0</text><text transform="translate(2395.7,829.0) rotate(-45)" text-anchor="end" font-family='"Liberation Sans", sans-serif' font-size="20.5" letter-spacing="0.55" fill="#585858">20<tspan dx="-1.85" letter-spacing="-1.30">1</tspan>4-<tspan dx="-1.85" letter-spacing="-1.30">1</tspan>2-<tspan dx="-1.85" letter-spacing="-1.30">1</tspan>7</text><text transform="translate(2436.2,829.0) rotate(-45)" text-anchor="end" font-family='"Liberation Sans", sans-serif' font-size="20.5" letter-spacing="0.55" fill="#585858">20<tspan dx="-1.85" letter-spacing="-1.30">1</tspan>4-<tspan dx="-1.85" letter-spacing="-1.30">1</tspan>2-24</text><text transform="translate(2476.8,829.0) rotate(-45)" text-anchor="end" font-family='"Liberation Sans", sans-serif' font-size="20.5" letter-spacing="0.55" fill="#585858">20<tspan dx="-1.85" letter-spacing="-1.30">1</tspan>5-0<tspan dx="-1.85" letter-spacing="-1.30">1</tspan>-03</text><text transform="translate(2517.3,829.0) rotate(-45)" text-anchor="end" font-family='"Liberation Sans", sans-serif' font-size="20.5" letter-spacing="0.55" fill="#585858">20<tspan dx="-1.85" letter-spacing="-1.30">1</tspan>5-0<tspan dx="-1.85" letter-spacing="-1.30">1</tspan>-<tspan dx="-1.85" letter-spacing="-1.30">1</tspan>0</text><text transform="translate(2557.9,829.0) rotate(-45)" text-anchor="end" font-family='"Liberation Sans", sans-serif' font-size="20.5" letter-spacing="0.55" fill="#585858">20<tspan dx="-1.85" letter-spacing="-1.30">1</tspan>5-0<tspan dx="-1.85" letter-spacing="-1.30">1</tspan>-<tspan dx="-1.85" letter-spacing="-1.30">1</tspan>7</text><text transform="translate(2598.4,829.0) rotate(-45)" text-anchor="end" font-family='"Liberation Sans", sans-serif' font-size="20.5" letter-spacing="0.55" fill="#585858">20<tspan dx="-1.85" letter-spacing="-1.30">1</tspan>5-0<tspan dx="-1.85" letter-spacing="-1.30">1</tspan>-24</text><text transform="translate(2638.9,829.0) rotate(-45)" text-anchor="end" font-family='"Liberation Sans", sans-serif' font-size="20.5" letter-spacing="0.55" fill="#585858">20<tspan dx="-1.85" letter-spacing="-1.30">1</tspan>5-0<tspan dx="-1.85" letter-spacing="-1.30">1</tspan>-3<tspan dx="-1.85" letter-spacing="-1.30">1</tspan></text><text transform="translate(2679.5,829.0) rotate(-45)" text-anchor="end" font-family='"Liberation Sans", sans-serif' font-size="20.5" letter-spacing="0.55" fill="#585858">20<tspan dx="-1.85" letter-spacing="-1.30">1</tspan>5-02-07</text><text transform="translate(2720.0,829.0) rotate(-45)" text-anchor="end" font-family='"Liberation Sans", sans-serif' font-size="20.5" letter-spacing="0.55" fill="#585858">20<tspan dx="-1.85" letter-spacing="-1.30">1</tspan>5-02-<tspan dx="-1.85" letter-spacing="-1.30">1</tspan>4</text><text transform="translate(2760.6,829.0) rotate(-45)" text-anchor="end" font-family='"Liberation Sans", sans-serif' font-size="20.5" letter-spacing="0.55" fill="#585858">20<tspan dx="-1.85" letter-spacing="-1.30">1</tspan>5-02-2<tspan dx="-1.85" letter-spacing="-1.30">1</tspan></text><text transform="translate(2801.1,829.0) rotate(-45)" text-anchor="end" font-family='"Liberation Sans", sans-serif' font-size="20.5" letter-spacing="0.55" fill="#585858">20<tspan dx="-1.85" letter-spacing="-1.30">1</tspan>5-02-28</text></g><line x1="128" y1="1084.5" x2="1395" y2="1084.5" stroke="#E2E2E4" stroke-width="2"/><line x1="128" y1="1150.7" x2="1395" y2="1150.7" stroke="#E2E2E4" stroke-width="2"/><line x1="128" y1="1212.8" x2="1395" y2="1212.8" stroke="#E2E2E4" stroke-width="2"/><line x1="128" y1="1277" x2="1395" y2="1277" stroke="#C9D2EA" stroke-width="2"/><text x="97.4" y="1095.7" text-anchor="end" font-family='"Liberation Sans", sans-serif' font-weight="700" font-size="17" letter-spacing="0.7" fill="#4F5377">1500</text><text x="97.4" y="1157.8" text-anchor="end" font-family='"Liberation Sans", sans-serif' font-weight="700" font-size="17" letter-spacing="0.7" fill="#4F5377">1000</text><text x="97.4" y="1221.7" text-anchor="end" font-family='"Liberation Sans", sans-serif' font-weight="700" font-size="17" letter-spacing="0.7" fill="#4F5377">500</text><text x="97.4" y="1285.6" text-anchor="end" font-family='"Liberation Sans", sans-serif' font-weight="700" font-size="17" letter-spacing="0.7" fill="#4F5377">0</text><polyline points="129.5,1199.6 132.7,1139.6 135.6,1125.6 138.4,1188.0 145.0,1236.4 151.2,1139.6 154.4,1125.6 157.3,1188.0 164.1,1236.4 170.5,1139.6 173.8,1125.6 176.6,1188.0 183.2,1236.4 189.4,1139.6 192.6,1125.6 195.4,1188.0 202.0,1236.4 208.2,1139.6 211.4,1125.6 214.2,1188.0 220.8,1236.4 227.0,1139.6 230.2,1125.6 233.1,1188.0 239.9,1236.4 246.3,1139.6 249.6,1125.6 251.7,1188.0 255.8,1199.6 259.5,1139.6 262.0,1125.6 264.4,1188.0 270.0,1236.4 275.4,1139.6 278.1,1125.6 280.9,1188.0 287.5,1236.4 293.7,1139.6 296.9,1125.6 299.8,1188.0 306.3,1236.4 312.6,1139.6 315.8,1125.6 318.7,1188.0 325.4,1236.4 331.8,1139.6 335.1,1125.6 337.9,1188.0 344.5,1236.4 350.7,1139.6 353.9,1125.6 356.8,1188.0 363.3,1236.4 369.6,1139.6 372.8,1125.6 375.7,1188.0 382.4,1236.4 388.8,1139.6 392.1,1125.6 394.9,1188.0 401.5,1236.4 407.7,1139.6 410.9,1125.6 413.8,1188.0 420.3,1236.4 426.6,1139.6 429.8,1125.6 432.6,1188.0 439.2,1236.4 445.4,1139.6 448.6,1125.6 451.5,1188.0 458.4,1236.4 464.9,1139.6 468.2,1125.6 471.0,1188.0 477.6,1236.4 483.8,1139.6 487.0,1125.6 489.9,1188.0 496.4,1236.4 502.7,1139.6 505.9,1125.6 508.7,1188.0 515.3,1236.4 521.5,1139.6 524.7,1125.6 527.6,1188.0 534.4,1236.4 540.7,1139.6 544.0,1125.6 546.0,1188.0 550.5,1236.4 556.9,1138.8 559.8,1188.0 566.4,1236.4 572.6,1139.6 575.8,1125.6 578.5,1188.0 583.8,1212.0 588.7,1139.6 591.9,1125.6 594.7,1188.0 601.3,1236.4 607.5,1139.6 610.7,1125.6 613.5,1188.0 620.1,1236.4 626.3,1139.6 629.5,1125.6 632.4,1188.0 639.0,1236.4 645.2,1139.6 648.4,1125.6 651.1,1188.0 656.4,1212.0 661.3,1139.6 664.5,1125.6 666.9,1188.0 672.6,1236.4 680.6,1138.8 683.5,1188.0 690.0,1236.4 696.3,1139.6 699.5,1125.6 702.2,1188.0 707.5,1212.0 712.4,1139.6 715.6,1125.6 718.4,1188.0 725.0,1236.4 731.2,1139.6 734.4,1125.6 737.0,1188.0 743.2,1236.4 748.9,1139.6 751.9,1125.6 755.0,1188.0 762.3,1236.4 769.1,1139.6 772.6,1125.6 775.5,1188.0 782.0,1236.4 788.3,1139.6 791.5,1125.6 794.3,1188.0 801.0,1236.4 807.3,1139.6 810.6,1125.6 813.4,1188.0 820.0,1236.4 826.2,1139.6 829.4,1125.6 832.3,1188.0 839.1,1236.4 845.4,1139.6 848.7,1125.6 851.6,1188.0 858.1,1236.4 864.4,1139.6 867.6,1125.6 870.4,1188.0 877.0,1236.4 883.2,1139.6 886.4,1125.6 889.2,1188.0 895.8,1236.4 902.0,1139.6 905.2,1125.6 908.0,1188.0 914.6,1236.4 920.8,1139.6 924.0,1125.6 926.9,1188.0 933.7,1236.4 940.1,1139.6 943.4,1125.6 946.2,1188.0 952.8,1236.4 959.0,1139.6 962.2,1125.6 965.0,1188.0 971.6,1236.4 977.8,1139.6 981.0,1125.6 983.4,1188.0 988.8,1236.4 994.0,1139.6 996.6,1125.6 999.4,1188.0 1006.0,1236.4 1012.2,1139.6 1015.4,1125.6 1018.3,1188.0 1025.1,1236.4 1031.5,1139.6 1034.8,1125.6 1037.6,1188.0 1044.2,1236.4 1050.4,1139.6 1053.6,1125.6 1056.5,1188.0 1063.0,1236.4 1069.2,1139.6 1072.4,1125.6 1075.3,1188.0 1082.0,1236.4 1088.3,1139.6 1091.5,1125.6 1094.4,1188.0 1101.2,1236.4 1107.6,1139.6 1110.9,1125.6 1113.7,1188.0 1120.3,1236.4 1126.5,1139.6 1129.7,1125.6 1132.5,1188.0 1139.1,1236.4 1145.3,1139.6 1148.5,1125.6 1151.4,1188.0 1158.2,1236.4 1164.6,1139.6 1167.9,1125.6 1170.7,1188.0 1177.3,1236.4 1183.5,1139.6 1186.7,1125.6 1189.6,1188.0 1196.1,1236.4 1202.4,1139.6 1205.5,1125.6 1207.7,1188.0 1212.0,1212.0 1215.9,1139.6 1218.5,1125.6 1221.1,1188.0 1226.1,1212.0 1230.7,1139.6 1233.8,1125.6 1236.6,1188.0 1243.2,1236.4 1249.4,1139.6 1252.6,1125.6 1255.4,1188.0 1262.0,1236.4 1268.2,1139.6 1271.4,1125.6 1274.3,1188.0 1280.8,1236.4 1287.1,1139.6 1290.3,1125.6 1293.2,1188.0 1300.1,1236.4 1306.5,1139.6 1309.9,1125.6 1312.7,1188.0 1319.3,1236.4 1325.5,1139.6 1328.7,1125.6 1331.5,1188.0 1338.1,1236.4 1344.3,1139.6 1347.5,1125.6 1350.5,1188.0 1357.3,1236.4 1363.8,1139.6 1367.2,1125.6 1370.1,1188.0 1376.8,1236.4 1383.2,1139.6 1386.5,1125.6 1389.0,1188.0 1393.2,1212.0" fill="none" stroke="#2BBBCB" stroke-width="4" stroke-linejoin="round" stroke-linecap="round"/><g clip-path="url(#c2)"><text transform="translate(134.0,1306.0) rotate(-45)" text-anchor="end" font-family='"Liberation Sans", sans-serif' font-size="20.5" letter-spacing="0.55" fill="#585858">20<tspan dx="-1.85" letter-spacing="-1.30">1</tspan>3-<tspan dx="-1.85" letter-spacing="-1.30">1</tspan><tspan dx="-1.85" letter-spacing="-1.30">1</tspan>-08</text><text transform="translate(175.2,1306.0) rotate(-45)" text-anchor="end" font-family='"Liberation Sans", sans-serif' font-size="20.5" letter-spacing="0.55" fill="#585858">20<tspan dx="-1.85" letter-spacing="-1.30">1</tspan>3-<tspan dx="-1.85" letter-spacing="-1.30">1</tspan><tspan dx="-1.85" letter-spacing="-1.30">1</tspan>-23</text><text transform="translate(216.5,1306.0) rotate(-45)" text-anchor="end" font-family='"Liberation Sans", sans-serif' font-size="20.5" letter-spacing="0.55" fill="#585858">20<tspan dx="-1.85" letter-spacing="-1.30">1</tspan>3-<tspan dx="-1.85" letter-spacing="-1.30">1</tspan>2-09</text><text transform="translate(257.8,1306.0) rotate(-45)" text-anchor="end" font-family='"Liberation Sans", sans-serif' font-size="20.5" letter-spacing="0.55" fill="#585858">20<tspan dx="-1.85" letter-spacing="-1.30">1</tspan>3-<tspan dx="-1.85" letter-spacing="-1.30">1</tspan>2-24</text><text transform="translate(299.1,1306.0) rotate(-45)" text-anchor="end" font-family='"Liberation Sans", sans-serif' font-size="20.5" letter-spacing="0.55" fill="#585858">20<tspan dx="-1.85" letter-spacing="-1.30">1</tspan>4-0<tspan dx="-1.85" letter-spacing="-1.30">1</tspan>-<tspan dx="-1.85" letter-spacing="-1.30">1</tspan><tspan dx="-1.85" letter-spacing="-1.30">1</tspan></text><text transform="translate(340.3,1306.0) rotate(-45)" text-anchor="end" font-family='"Liberation Sans", sans-serif' font-size="20.5" letter-spacing="0.55" fill="#585858">20<tspan dx="-1.85" letter-spacing="-1.30">1</tspan>4-0<tspan dx="-1.85" letter-spacing="-1.30">1</tspan>-27</text><text transform="translate(381.6,1306.0) rotate(-45)" text-anchor="end" font-family='"Liberation Sans", sans-serif' font-size="20.5" letter-spacing="0.55" fill="#585858">20<tspan dx="-1.85" letter-spacing="-1.30">1</tspan>4-02-<tspan dx="-1.85" letter-spacing="-1.30">1</tspan><tspan dx="-1.85" letter-spacing="-1.30">1</tspan></text><text transform="translate(422.9,1306.0) rotate(-45)" text-anchor="end" font-family='"Liberation Sans", sans-serif' font-size="20.5" letter-spacing="0.55" fill="#585858">20<tspan dx="-1.85" letter-spacing="-1.30">1</tspan>4-02-26</text><text transform="translate(464.2,1306.0) rotate(-45)" text-anchor="end" font-family='"Liberation Sans", sans-serif' font-size="20.5" letter-spacing="0.55" fill="#585858">20<tspan dx="-1.85" letter-spacing="-1.30">1</tspan>4-03-<tspan dx="-1.85" letter-spacing="-1.30">1</tspan>3</text><text transform="translate(505.4,1306.0) rotate(-45)" text-anchor="end" font-family='"Liberation Sans", sans-serif' font-size="20.5" letter-spacing="0.55" fill="#585858">20<tspan dx="-1.85" letter-spacing="-1.30">1</tspan>4-03-28</text><text transform="translate(546.7,1306.0) rotate(-45)" text-anchor="end" font-family='"Liberation Sans", sans-serif' font-size="20.5" letter-spacing="0.55" fill="#585858">20<tspan dx="-1.85" letter-spacing="-1.30">1</tspan>4-04-<tspan dx="-1.85" letter-spacing="-1.30">1</tspan>2</text><text transform="translate(588.0,1306.0) rotate(-45)" text-anchor="end" font-family='"Liberation Sans", sans-serif' font-size="20.5" letter-spacing="0.55" fill="#585858">20<tspan dx="-1.85" letter-spacing="-1.30">1</tspan>4-04-30</text><text transform="translate(629.3,1306.0) rotate(-45)" text-anchor="end" font-family='"Liberation Sans", sans-serif' font-size="20.5" letter-spacing="0.55" fill="#585858">20<tspan dx="-1.85" letter-spacing="-1.30">1</tspan>4-05-<tspan dx="-1.85" letter-spacing="-1.30">1</tspan>6</text><text transform="translate(670.5,1306.0) rotate(-45)" text-anchor="end" font-family='"Liberation Sans", sans-serif' font-size="20.5" letter-spacing="0.55" fill="#585858">20<tspan dx="-1.85" letter-spacing="-1.30">1</tspan>4-06-02</text><text transform="translate(711.8,1306.0) rotate(-45)" text-anchor="end" font-family='"Liberation Sans", sans-serif' font-size="20.5" letter-spacing="0.55" fill="#585858">20<tspan dx="-1.85" letter-spacing="-1.30">1</tspan>4-06-<tspan dx="-1.85" letter-spacing="-1.30">1</tspan>8</text><text transform="translate(753.1,1306.0) rotate(-45)" text-anchor="end" font-family='"Liberation Sans", sans-serif' font-size="20.5" letter-spacing="0.55" fill="#585858">20<tspan dx="-1.85" letter-spacing="-1.30">1</tspan>4-07-04</text><text transform="translate(794.4,1306.0) rotate(-45)" text-anchor="end" font-family='"Liberation Sans", sans-serif' font-size="20.5" letter-spacing="0.55" fill="#585858">20<tspan dx="-1.85" letter-spacing="-1.30">1</tspan>4-07-<tspan dx="-1.85" letter-spacing="-1.30">1</tspan>9</text><text transform="translate(835.6,1306.0) rotate(-45)" text-anchor="end" font-family='"Liberation Sans", sans-serif' font-size="20.5" letter-spacing="0.55" fill="#585858">20<tspan dx="-1.85" letter-spacing="-1.30">1</tspan>4-08-04</text><text transform="translate(876.9,1306.0) rotate(-45)" text-anchor="end" font-family='"Liberation Sans", sans-serif' font-size="20.5" letter-spacing="0.55" fill="#585858">20<tspan dx="-1.85" letter-spacing="-1.30">1</tspan>4-08-<tspan dx="-1.85" letter-spacing="-1.30">1</tspan>9</text><text transform="translate(918.2,1306.0) rotate(-45)" text-anchor="end" font-family='"Liberation Sans", sans-serif' font-size="20.5" letter-spacing="0.55" fill="#585858">20<tspan dx="-1.85" letter-spacing="-1.30">1</tspan>4-09-03</text><text transform="translate(959.5,1306.0) rotate(-45)" text-anchor="end" font-family='"Liberation Sans", sans-serif' font-size="20.5" letter-spacing="0.55" fill="#585858">20<tspan dx="-1.85" letter-spacing="-1.30">1</tspan>4-09-<tspan dx="-1.85" letter-spacing="-1.30">1</tspan>8</text><text transform="translate(1000.7,1306.0) rotate(-45)" text-anchor="end" font-family='"Liberation Sans", sans-serif' font-size="20.5" letter-spacing="0.55" fill="#585858">20<tspan dx="-1.85" letter-spacing="-1.30">1</tspan>4-<tspan dx="-1.85" letter-spacing="-1.30">1</tspan>0-04</text><text transform="translate(1042.0,1306.0) rotate(-45)" text-anchor="end" font-family='"Liberation Sans", sans-serif' font-size="20.5" letter-spacing="0.55" fill="#585858">20<tspan dx="-1.85" letter-spacing="-1.30">1</tspan>4-<tspan dx="-1.85" letter-spacing="-1.30">1</tspan>0-20</text><text transform="translate(1083.3,1306.0) rotate(-45)" text-anchor="end" font-family='"Liberation Sans", sans-serif' font-size="20.5" letter-spacing="0.55" fill="#585858">20<tspan dx="-1.85" letter-spacing="-1.30">1</tspan>4-<tspan dx="-1.85" letter-spacing="-1.30">1</tspan><tspan dx="-1.85" letter-spacing="-1.30">1</tspan>-04</text><text transform="translate(1124.6,1306.0) rotate(-45)" text-anchor="end" font-family='"Liberation Sans", sans-serif' font-size="20.5" letter-spacing="0.55" fill="#585858">20<tspan dx="-1.85" letter-spacing="-1.30">1</tspan>4-<tspan dx="-1.85" letter-spacing="-1.30">1</tspan><tspan dx="-1.85" letter-spacing="-1.30">1</tspan>-<tspan dx="-1.85" letter-spacing="-1.30">1</tspan>9</text><text transform="translate(1165.8,1306.0) rotate(-45)" text-anchor="end" font-family='"Liberation Sans", sans-serif' font-size="20.5" letter-spacing="0.55" fill="#585858">20<tspan dx="-1.85" letter-spacing="-1.30">1</tspan>4-<tspan dx="-1.85" letter-spacing="-1.30">1</tspan>2-04</text><text transform="translate(1207.1,1306.0) rotate(-45)" text-anchor="end" font-family='"Liberation Sans", sans-serif' font-size="20.5" letter-spacing="0.55" fill="#585858">20<tspan dx="-1.85" letter-spacing="-1.30">1</tspan>4-<tspan dx="-1.85" letter-spacing="-1.30">1</tspan>2-<tspan dx="-1.85" letter-spacing="-1.30">1</tspan>9</text><text transform="translate(1248.4,1306.0) rotate(-45)" text-anchor="end" font-family='"Liberation Sans", sans-serif' font-size="20.5" letter-spacing="0.55" fill="#585858">20<tspan dx="-1.85" letter-spacing="-1.30">1</tspan>5-0<tspan dx="-1.85" letter-spacing="-1.30">1</tspan>-07</text><text transform="translate(1289.7,1306.0) rotate(-45)" text-anchor="end" font-family='"Liberation Sans", sans-serif' font-size="20.5" letter-spacing="0.55" fill="#585858">20<tspan dx="-1.85" letter-spacing="-1.30">1</tspan>5-0<tspan dx="-1.85" letter-spacing="-1.30">1</tspan>-22</text><text transform="translate(1330.9,1306.0) rotate(-45)" text-anchor="end" font-family='"Liberation Sans", sans-serif' font-size="20.5" letter-spacing="0.55" fill="#585858">20<tspan dx="-1.85" letter-spacing="-1.30">1</tspan>5-02-06</text><text transform="translate(1372.2,1306.0) rotate(-45)" text-anchor="end" font-family='"Liberation Sans", sans-serif' font-size="20.5" letter-spacing="0.55" fill="#585858">20<tspan dx="-1.85" letter-spacing="-1.30">1</tspan>5-02-2<tspan dx="-1.85" letter-spacing="-1.30">1</tspan></text></g><line x1="110" y1="1564.8" x2="1395" y2="1564.8" stroke="#E2E2E4" stroke-width="2"/><line x1="110" y1="1662.6" x2="1395" y2="1662.6" stroke="#E2E2E4" stroke-width="2"/><line x1="110" y1="1756.7" x2="1395" y2="1756.7" stroke="#C9D2EA" stroke-width="2"/><text x="80" y="1576" text-anchor="end" font-family='"Liberation Sans", sans-serif' font-weight="700" font-size="17" letter-spacing="0.7" fill="#4F5377">2k</text><text x="80" y="1670" text-anchor="end" font-family='"Liberation Sans", sans-serif' font-weight="700" font-size="17" letter-spacing="0.7" fill="#4F5377">0</text><text x="80" y="1766" text-anchor="end" font-family='"Liberation Sans", sans-serif' font-weight="700" font-size="17" letter-spacing="0.7" fill="#4F5377">-2k</text><polyline points="111.5,1659.9 117.9,1681.5 121.3,1674.1 125.0,1669.9 127.6,1653.2 132.7,1656.9 136.4,1654.7 140.1,1642.7 143.8,1652.9 147.2,1669.5 149.9,1658.4 152.7,1690.8 156.8,1693.5 160.5,1690.4 166.0,1643.6 169.7,1649.2 172.8,1606.3 176.2,1626.1 179.0,1630.7 182.3,1629.2 186.0,1637.7 189.1,1633.4 192.8,1641.8 195.6,1672.3 198.4,1669.5 201.5,1681.5 205.8,1671.3 208.9,1669.5 211.3,1653.2 214.4,1656.9 217.8,1645.5 220.9,1653.8 224.2,1642.7 227.6,1652.9 233.5,1690.8 240.9,1668.6 246.4,1606.3 249.6,1640.8 252.9,1626.1 256.6,1630.7 259.9,1629.2 263.6,1634.4 267.3,1642.7 272.3,1672.3 275.5,1669.5 278.8,1681.5 284.3,1653.2 290.8,1656.9 294.5,1645.5 298.2,1652.9 301.0,1652.9 304.3,1669.5 307.4,1658.4 310.6,1690.8 313.9,1679.7 317.2,1693.5 323.7,1643.6 326.9,1649.2 330.0,1606.3 333.3,1640.8 336.5,1642.7 339.8,1630.7 343.1,1629.7 346.3,1638.1 350.0,1634.0 353.7,1643.6 356.4,1660.3 362.0,1681.5 366.0,1672.3 369.4,1669.5 372.1,1653.2 375.3,1656.9 378.2,1645.5 381.4,1653.8 384.7,1642.7 387.9,1652.9 391.2,1669.5 394.3,1658.4 400.4,1693.5 404.1,1689.8 410.0,1643.6 413.4,1642.7 416.5,1631.6 420.2,1628.8 423.4,1638.1 426.7,1634.0 430.4,1642.7 433.2,1660.3 439.3,1681.5 442.4,1674.1 445.5,1669.5 448.9,1653.2 452.2,1656.9 455.3,1645.5 458.5,1653.8 461.8,1642.7 465.1,1652.9 468.3,1669.5 471.4,1658.4 478.1,1693.5 481.8,1689.8 487.3,1643.6 490.5,1649.2 494.2,1640.8 496.9,1642.7 500.3,1626.1 503.4,1630.7 507.1,1628.8 510.8,1638.1 513.9,1641.8 518.2,1672.3 522.5,1669.5 526.1,1681.5 531.1,1653.8 534.8,1656.9 538.5,1656.9 542.2,1644.5 545.2,1642.7 548.9,1658.4 551.6,1690.8 554.4,1679.7 558.1,1693.5 561.8,1689.8 564.6,1643.6 567.9,1649.2 571.1,1606.3 573.8,1624.2 577.5,1629.7 580.8,1637.1 584.0,1633.4 587.7,1641.8 592.3,1669.5 594.2,1672.3 596.9,1669.5 600.1,1673.6 603.4,1669.9 606.2,1653.2 609.3,1656.9 612.6,1656.9 615.8,1645.5 619.1,1642.7 622.8,1652.9 625.6,1669.5 628.9,1658.4 631.7,1690.8 634.8,1679.7 638.2,1689.8 644.1,1643.6 648.1,1606.3 651.1,1640.8 654.2,1626.1 657.9,1630.7 661.3,1628.8 664.4,1637.1 667.7,1633.4 671.8,1642.7 675.9,1672.3 677.4,1681.5 681.1,1674.1 683.8,1669.5 687.0,1653.2 690.3,1656.9 693.1,1645.5 696.8,1653.8 699.5,1653.2 703.2,1669.5 706.0,1690.8 708.8,1679.7 712.5,1693.5 715.8,1689.8 721.7,1643.6 725.1,1606.3 728.2,1642.7 731.5,1626.1 734.7,1630.7 738.4,1628.8 741.7,1637.1 744.8,1641.8 750.4,1672.3 754.1,1669.5 757.4,1681.5 760.6,1673.2 763.7,1653.2 769.8,1656.9 773.5,1645.5 776.3,1653.8 780.0,1642.7 783.3,1669.5 786.1,1658.4 789.8,1690.8 792.9,1679.7 796.0,1693.5 799.4,1689.8 802.1,1643.6 805.3,1649.2 808.6,1606.3 811.9,1640.8 815.1,1642.7 818.2,1626.1 822.5,1629.7 825.3,1637.1 829.0,1633.4 832.7,1642.7 841.0,1681.5 843.7,1675.0 847.4,1669.5 850.6,1653.2 856.7,1656.9 863.2,1642.7 869.6,1669.5 873.0,1658.4 876.1,1690.8 879.2,1693.5 882.6,1689.8 888.1,1643.6 891.8,1649.2 895.1,1606.3 898.3,1642.7 902.0,1626.1 905.3,1630.7 908.8,1628.8 912.1,1637.1 914.9,1634.0 919.5,1669.5 923.2,1672.3 925.5,1669.5 928.4,1681.5 932.5,1673.2 936.2,1669.5 939.0,1655.6 942.7,1656.9 946.4,1645.5 949.1,1653.8 951.0,1642.7 954.7,1653.8 957.4,1658.4 960.2,1690.8 963.5,1679.7 966.7,1693.5 970.4,1689.8 975.2,1643.6 978.9,1606.3 982.0,1642.7 985.0,1626.1 989.0,1629.7 992.7,1634.4 996.1,1642.7 1001.1,1672.3 1004.4,1669.5 1007.9,1681.5 1014.0,1653.2 1020.5,1656.9 1023.8,1645.1 1027.9,1652.9 1030.6,1653.2 1033.8,1669.5 1036.7,1658.4 1039.9,1690.8 1043.0,1679.7 1046.3,1693.5 1052.8,1643.6 1056.0,1649.2 1059.3,1606.3 1062.4,1640.8 1065.8,1642.7 1069.5,1630.7 1072.6,1628.8 1075.9,1638.1 1078.7,1634.0 1082.4,1642.7 1086.1,1662.1 1091.6,1681.5 1094.4,1674.1 1098.1,1669.5 1101.3,1653.2 1104.0,1656.9 1107.4,1645.5 1111.1,1653.8 1113.8,1642.7 1117.5,1652.9 1120.3,1669.5 1123.6,1658.4 1130.1,1693.5 1133.8,1689.8 1139.7,1643.6 1142.5,1649.2 1146.2,1642.7 1149.3,1626.1 1152.7,1630.7 1155.8,1628.8 1159.1,1637.1 1161.9,1634.0 1164.7,1662.1 1168.4,1672.3 1171.7,1669.5 1174.8,1681.5 1178.5,1673.2 1181.3,1669.5 1184.4,1655.6 1187.4,1656.9 1190.9,1645.5 1194.2,1653.8 1197.0,1642.7 1200.7,1653.8 1204.4,1658.4 1207.2,1690.8 1213.7,1668.6 1219.8,1606.3 1222.9,1640.8 1226.2,1626.1 1229.4,1630.7 1232.5,1637.1 1235.8,1634.0 1239.5,1642.7 1245.1,1672.3 1248.8,1669.5 1251.9,1673.6 1255.3,1669.9 1258.6,1653.2 1264.5,1656.9 1267.8,1645.5 1271.0,1642.7 1277.4,1669.5 1280.6,1658.4 1283.9,1690.8 1287.1,1679.7 1290.4,1689.8 1296.9,1643.6 1300.0,1649.2 1303.3,1606.3 1306.7,1640.8 1309.8,1626.1 1313.1,1630.7 1316.3,1628.8 1319.6,1637.1 1322.7,1634.0 1326.4,1642.7 1329.2,1672.3 1332.0,1669.5 1335.3,1681.5 1338.5,1673.2 1342.1,1669.5 1344.9,1653.2 1348.3,1656.9 1351.4,1645.5 1354.7,1653.8 1357.9,1642.7 1361.0,1652.9 1367.1,1690.8 1370.8,1679.7 1373.9,1693.5 1377.3,1689.8 1383.7,1643.6 1387.4,1626.1 1390.2,1630.7 1393.9,1628.8" fill="none" stroke="#2BBBCB" stroke-width="4" stroke-linejoin="round" stroke-linecap="round"/><g clip-path="url(#c3)"><text transform="translate(116.0,1787.0) rotate(-45)" text-anchor="end" font-family='"Liberation Sans", sans-serif' font-size="20.5" letter-spacing="0.55" fill="#585858">20<tspan dx="-1.85" letter-spacing="-1.30">1</tspan>3-<tspan dx="-1.85" letter-spacing="-1.30">1</tspan>...</text><text transform="translate(154.5,1787.0) rotate(-45)" text-anchor="end" font-family='"Liberation Sans", sans-serif' font-size="20.5" letter-spacing="0.55" fill="#585858">20<tspan dx="-1.85" letter-spacing="-1.30">1</tspan>3-<tspan dx="-1.85" letter-spacing="-1.30">1</tspan><tspan dx="-1.85" letter-spacing="-1.30">1</tspan>-22</text><text transform="translate(193.0,1787.0) rotate(-45)" text-anchor="end" font-family='"Liberation Sans", sans-serif' font-size="20.5" letter-spacing="0.55" fill="#585858">20<tspan dx="-1.85" letter-spacing="-1.30">1</tspan>3-<tspan dx="-1.85" letter-spacing="-1.30">1</tspan>2-06</text><text transform="translate(231.5,1787.0) rotate(-45)" text-anchor="end" font-family='"Liberation Sans", sans-serif' font-size="20.5" letter-spacing="0.55" fill="#585858">20<tspan dx="-1.85" letter-spacing="-1.30">1</tspan>3-<tspan dx="-1.85" letter-spacing="-1.30">1</tspan>2-20</text><text transform="translate(270.0,1787.0) rotate(-45)" text-anchor="end" font-family='"Liberation Sans", sans-serif' font-size="20.5" letter-spacing="0.55" fill="#585858">20<tspan dx="-1.85" letter-spacing="-1.30">1</tspan>4-0<tspan dx="-1.85" letter-spacing="-1.30">1</tspan>-07</text><text transform="translate(308.5,1787.0) rotate(-45)" text-anchor="end" font-family='"Liberation Sans", sans-serif' font-size="20.5" letter-spacing="0.55" fill="#585858">20<tspan dx="-1.85" letter-spacing="-1.30">1</tspan>4-0<tspan dx="-1.85" letter-spacing="-1.30">1</tspan>-2<tspan dx="-1.85" letter-spacing="-1.30">1</tspan></text><text transform="translate(347.1,1787.0) rotate(-45)" text-anchor="end" font-family='"Liberation Sans", sans-serif' font-size="20.5" letter-spacing="0.55" fill="#585858">20<tspan dx="-1.85" letter-spacing="-1.30">1</tspan>4-02-04</text><text transform="translate(385.6,1787.0) rotate(-45)" text-anchor="end" font-family='"Liberation Sans", sans-serif' font-size="20.5" letter-spacing="0.55" fill="#585858">20<tspan dx="-1.85" letter-spacing="-1.30">1</tspan>4-02-<tspan dx="-1.85" letter-spacing="-1.30">1</tspan>8</text><text transform="translate(424.1,1787.0) rotate(-45)" text-anchor="end" font-family='"Liberation Sans", sans-serif' font-size="20.5" letter-spacing="0.55" fill="#585858">20<tspan dx="-1.85" letter-spacing="-1.30">1</tspan>4-03-04</text><text transform="translate(462.6,1787.0) rotate(-45)" text-anchor="end" font-family='"Liberation Sans", sans-serif' font-size="20.5" letter-spacing="0.55" fill="#585858">20<tspan dx="-1.85" letter-spacing="-1.30">1</tspan>4-03-<tspan dx="-1.85" letter-spacing="-1.30">1</tspan>8</text><text transform="translate(501.1,1787.0) rotate(-45)" text-anchor="end" font-family='"Liberation Sans", sans-serif' font-size="20.5" letter-spacing="0.55" fill="#585858">20<tspan dx="-1.85" letter-spacing="-1.30">1</tspan>4-04-0<tspan dx="-1.85" letter-spacing="-1.30">1</tspan></text><text transform="translate(539.6,1787.0) rotate(-45)" text-anchor="end" font-family='"Liberation Sans", sans-serif' font-size="20.5" letter-spacing="0.55" fill="#585858">20<tspan dx="-1.85" letter-spacing="-1.30">1</tspan>4-04-<tspan dx="-1.85" letter-spacing="-1.30">1</tspan>5</text><text transform="translate(578.1,1787.0) rotate(-45)" text-anchor="end" font-family='"Liberation Sans", sans-serif' font-size="20.5" letter-spacing="0.55" fill="#585858">20<tspan dx="-1.85" letter-spacing="-1.30">1</tspan>4-05-02</text><text transform="translate(616.6,1787.0) rotate(-45)" text-anchor="end" font-family='"Liberation Sans", sans-serif' font-size="20.5" letter-spacing="0.55" fill="#585858">20<tspan dx="-1.85" letter-spacing="-1.30">1</tspan>4-05-<tspan dx="-1.85" letter-spacing="-1.30">1</tspan>6</text><text transform="translate(655.2,1787.0) rotate(-45)" text-anchor="end" font-family='"Liberation Sans", sans-serif' font-size="20.5" letter-spacing="0.55" fill="#585858">20<tspan dx="-1.85" letter-spacing="-1.30">1</tspan>4-05-3<tspan dx="-1.85" letter-spacing="-1.30">1</tspan></text><text transform="translate(693.7,1787.0) rotate(-45)" text-anchor="end" font-family='"Liberation Sans", sans-serif' font-size="20.5" letter-spacing="0.55" fill="#585858">20<tspan dx="-1.85" letter-spacing="-1.30">1</tspan>4-06-<tspan dx="-1.85" letter-spacing="-1.30">1</tspan>6</text><text transform="translate(732.2,1787.0) rotate(-45)" text-anchor="end" font-family='"Liberation Sans", sans-serif' font-size="20.5" letter-spacing="0.55" fill="#585858">20<tspan dx="-1.85" letter-spacing="-1.30">1</tspan>4-07-0<tspan dx="-1.85" letter-spacing="-1.30">1</tspan></text><text transform="translate(770.7,1787.0) rotate(-45)" text-anchor="end" font-family='"Liberation Sans", sans-serif' font-size="20.5" letter-spacing="0.55" fill="#585858">20<tspan dx="-1.85" letter-spacing="-1.30">1</tspan>4-07-<tspan dx="-1.85" letter-spacing="-1.30">1</tspan>5</text><text transform="translate(809.2,1787.0) rotate(-45)" text-anchor="end" font-family='"Liberation Sans", sans-serif' font-size="20.5" letter-spacing="0.55" fill="#585858">20<tspan dx="-1.85" letter-spacing="-1.30">1</tspan>4-07-29</text><text transform="translate(847.7,1787.0) rotate(-45)" text-anchor="end" font-family='"Liberation Sans", sans-serif' font-size="20.5" letter-spacing="0.55" fill="#585858">20<tspan dx="-1.85" letter-spacing="-1.30">1</tspan>4-08-<tspan dx="-1.85" letter-spacing="-1.30">1</tspan>2</text><text transform="translate(886.2,1787.0) rotate(-45)" text-anchor="end" font-family='"Liberation Sans", sans-serif' font-size="20.5" letter-spacing="0.55" fill="#585858">20<tspan dx="-1.85" letter-spacing="-1.30">1</tspan>4-08-26</text><text transform="translate(924.8,1787.0) rotate(-45)" text-anchor="end" font-family='"Liberation Sans", sans-serif' font-size="20.5" letter-spacing="0.55" fill="#585858">20<tspan dx="-1.85" letter-spacing="-1.30">1</tspan>4-09-09</text><text transform="translate(963.3,1787.0) rotate(-45)" text-anchor="end" font-family='"Liberation Sans", sans-serif' font-size="20.5" letter-spacing="0.55" fill="#585858">20<tspan dx="-1.85" letter-spacing="-1.30">1</tspan>4-09-23</text><text transform="translate(1001.8,1787.0) rotate(-45)" text-anchor="end" font-family='"Liberation Sans", sans-serif' font-size="20.5" letter-spacing="0.55" fill="#585858">20<tspan dx="-1.85" letter-spacing="-1.30">1</tspan>4-<tspan dx="-1.85" letter-spacing="-1.30">1</tspan>0-08</text><text transform="translate(1040.3,1787.0) rotate(-45)" text-anchor="end" font-family='"Liberation Sans", sans-serif' font-size="20.5" letter-spacing="0.55" fill="#585858">20<tspan dx="-1.85" letter-spacing="-1.30">1</tspan>4-<tspan dx="-1.85" letter-spacing="-1.30">1</tspan>0-22</text><text transform="translate(1078.8,1787.0) rotate(-45)" text-anchor="end" font-family='"Liberation Sans", sans-serif' font-size="20.5" letter-spacing="0.55" fill="#585858">20<tspan dx="-1.85" letter-spacing="-1.30">1</tspan>4-<tspan dx="-1.85" letter-spacing="-1.30">1</tspan><tspan dx="-1.85" letter-spacing="-1.30">1</tspan>-05</text><text transform="translate(1117.3,1787.0) rotate(-45)" text-anchor="end" font-family='"Liberation Sans", sans-serif' font-size="20.5" letter-spacing="0.55" fill="#585858">20<tspan dx="-1.85" letter-spacing="-1.30">1</tspan>4-<tspan dx="-1.85" letter-spacing="-1.30">1</tspan><tspan dx="-1.85" letter-spacing="-1.30">1</tspan>-<tspan dx="-1.85" letter-spacing="-1.30">1</tspan>9</text><text transform="translate(1155.8,1787.0) rotate(-45)" text-anchor="end" font-family='"Liberation Sans", sans-serif' font-size="20.5" letter-spacing="0.55" fill="#585858">20<tspan dx="-1.85" letter-spacing="-1.30">1</tspan>4-<tspan dx="-1.85" letter-spacing="-1.30">1</tspan>2-03</text><text transform="translate(1194.3,1787.0) rotate(-45)" text-anchor="end" font-family='"Liberation Sans", sans-serif' font-size="20.5" letter-spacing="0.55" fill="#585858">20<tspan dx="-1.85" letter-spacing="-1.30">1</tspan>4-<tspan dx="-1.85" letter-spacing="-1.30">1</tspan>2-<tspan dx="-1.85" letter-spacing="-1.30">1</tspan>7</text><text transform="translate(1232.9,1787.0) rotate(-45)" text-anchor="end" font-family='"Liberation Sans", sans-serif' font-size="20.5" letter-spacing="0.55" fill="#585858">20<tspan dx="-1.85" letter-spacing="-1.30">1</tspan>5-0<tspan dx="-1.85" letter-spacing="-1.30">1</tspan>-03</text><text transform="translate(1271.4,1787.0) rotate(-45)" text-anchor="end" font-family='"Liberation Sans", sans-serif' font-size="20.5" letter-spacing="0.55" fill="#585858">20<tspan dx="-1.85" letter-spacing="-1.30">1</tspan>5-0<tspan dx="-1.85" letter-spacing="-1.30">1</tspan>-<tspan dx="-1.85" letter-spacing="-1.30">1</tspan>7</text><text transform="translate(1309.9,1787.0) rotate(-45)" text-anchor="end" font-family='"Liberation Sans", sans-serif' font-size="20.5" letter-spacing="0.55" fill="#585858">20<tspan dx="-1.85" letter-spacing="-1.30">1</tspan>5-0<tspan dx="-1.85" letter-spacing="-1.30">1</tspan>-3<tspan dx="-1.85" letter-spacing="-1.30">1</tspan></text><text transform="translate(1348.4,1787.0) rotate(-45)" text-anchor="end" font-family='"Liberation Sans", sans-serif' font-size="20.5" letter-spacing="0.55" fill="#585858">20<tspan dx="-1.85" letter-spacing="-1.30">1</tspan>5-02-<tspan dx="-1.85" letter-spacing="-1.30">1</tspan>4</text><text transform="translate(1386.9,1787.0) rotate(-45)" text-anchor="end" font-family='"Liberation Sans", sans-serif' font-size="20.5" letter-spacing="0.55" fill="#585858">20<tspan dx="-1.85" letter-spacing="-1.30">1</tspan>5-02-28</text></g><line x1="1530" y1="1564.8" x2="2819" y2="1564.8" stroke="#E2E2E4" stroke-width="2"/><line x1="1530" y1="1660.8" x2="2819" y2="1660.8" stroke="#E2E2E4" stroke-width="2"/><line x1="1530" y1="1754.5" x2="2819" y2="1754.5" stroke="#C9D2EA" stroke-width="2"/><text x="1500" y="1576" text-anchor="end" font-family='"Liberation Sans", sans-serif' font-weight="700" font-size="17" letter-spacing="0.7" fill="#4F5377">5k</text><text x="1500" y="1670" text-anchor="end" font-family='"Liberation Sans", sans-serif' font-weight="700" font-size="17" letter-spacing="0.7" fill="#4F5377">4k</text><text x="1500" y="1764" text-anchor="end" font-family='"Liberation Sans", sans-serif' font-weight="700" font-size="17" letter-spacing="0.7" fill="#4F5377">3k</text><polyline points="1531.1,1594.7 1534.8,1598.0 1537.9,1613.1 1541.1,1610.3 1547.7,1617.4 1551.5,1624.4 1557.1,1623.1 1560.9,1627.3 1564.7,1625.4 1569.4,1624.4 1576.4,1624.4 1580.2,1630.7 1587.4,1632.9 1593.1,1634.5 1596.5,1632.9 1599.7,1636.3 1606.3,1634.8 1612.0,1633.3 1615.4,1633.3 1618.6,1638.6 1625.2,1640.1 1634.7,1637.7 1638.1,1640.5 1644.1,1638.6 1650.7,1636.2 1657.4,1637.7 1664.0,1639.0 1668.7,1638.2 1675.3,1635.8 1680.0,1637.7 1691.4,1638.2 1698.9,1640.9 1706.5,1641.8 1715.0,1641.8 1721.6,1644.7 1728.3,1646.7 1735.2,1650.9 1745.3,1652.8 1753.8,1652.8 1764.2,1663.2 1771.7,1670.8 1777.4,1680.2 1785.9,1672.1 1791.6,1673.2 1796.3,1674.5 1802.0,1667.5 1809.6,1667.5 1817.1,1672.6 1823.7,1674.5 1827.5,1674.5 1840.7,1664.7 1843.6,1666.0 1847.4,1673.6 1854.0,1676.4 1860.6,1678.3 1865.3,1676.0 1870.1,1672.6 1876.7,1674.2 1886.1,1675.5 1895.6,1674.2 1905.0,1675.1 1914.5,1675.1 1923.9,1676.4 1929.6,1677.4 1936.2,1677.9 1943.8,1676.4 1947.6,1679.3 1954.2,1678.3 1961.8,1678.7 1967.4,1677.9 1974.0,1682.1 1980.1,1681.2 1986.7,1679.6 1995.3,1679.6 2000.0,1682.1 2007.5,1684.4 2017.0,1684.0 2024.6,1681.5 2030.2,1682.7 2040.6,1683.0 2053.9,1683.6 2063.3,1682.1 2069.9,1684.9 2076.6,1688.1 2079.4,1683.6 2083.2,1684.9 2086.0,1680.8 2093.6,1680.8 2101.1,1679.3 2106.8,1678.9 2112.1,1680.2 2115.3,1675.5 2119.1,1677.0 2127.6,1676.8 2135.2,1678.7 2142.7,1682.1 2154.1,1681.2 2159.7,1678.7 2173.0,1679.6 2180.5,1682.7 2189.0,1684.9 2191.9,1680.6 2198.5,1681.5 2208.9,1684.4 2218.4,1687.2 2221.2,1683.6 2226.9,1685.9 2237.3,1685.3 2246.7,1688.7 2249.6,1684.4 2253.3,1686.8 2263.7,1687.4 2267.5,1688.3 2275.1,1687.8 2285.5,1689.3 2290.2,1692.5 2299.7,1689.1 2309.1,1687.8 2314.8,1689.3 2324.2,1694.0 2331.8,1694.0 2339.4,1692.9 2348.8,1691.0 2354.5,1692.5 2362.1,1696.3 2369.6,1694.0 2379.1,1695.7 2386.6,1694.0 2398.0,1690.2 2405.5,1688.1 2414.5,1691.9 2421.1,1690.6 2427.7,1685.5 2434.3,1681.2 2440.9,1674.5 2447.5,1667.9 2453.2,1665.5 2459.8,1661.9 2465.5,1659.4 2471.2,1658.1 2478.7,1654.1 2485.4,1646.6 2492.0,1640.1 2499.5,1631.6 2508.0,1618.8 2511.8,1618.8 2514.7,1622.0 2520.3,1617.8 2524.1,1619.7 2527.5,1625.0 2530.7,1619.7 2535.5,1619.1 2546.8,1622.5 2552.5,1621.6 2561.9,1619.1 2569.5,1616.9 2577.1,1619.1 2584.6,1622.0 2594.1,1620.7 2599.7,1618.8 2608.3,1615.4 2618.7,1617.8 2630.0,1618.4 2634.7,1621.6 2641.3,1622.9 2650.8,1623.1 2656.5,1621.2 2665.9,1621.6 2675.4,1627.8 2684.8,1632.4 2694.3,1636.7 2703.7,1641.4 2708.5,1644.9 2714.1,1646.2 2720.7,1649.4 2726.4,1650.9 2734.0,1658.1 2743.4,1668.9 2753.8,1684.0 2762.3,1674.0 2770.9,1674.0 2778.4,1667.9 2782.2,1676.4 2789.8,1677.8 2797.3,1677.0 2805.8,1678.9 2813.4,1677.8 2818.1,1679.3" fill="none" stroke="#3A3BAA" stroke-width="4" stroke-linejoin="round" stroke-linecap="round"/><g clip-path="url(#c4)"><text transform="translate(1538.0,1786.0) rotate(-45)" text-anchor="end" font-family='"Liberation Sans", sans-serif' font-size="20.5" letter-spacing="0.55" fill="#585858">20<tspan dx="-1.85" letter-spacing="-1.30">1</tspan>3-<tspan dx="-1.85" letter-spacing="-1.30">1</tspan>...</text><text transform="translate(1576.6,1786.0) rotate(-45)" text-anchor="end" font-family='"Liberation Sans", sans-serif' font-size="20.5" letter-spacing="0.55" fill="#585858">20<tspan dx="-1.85" letter-spacing="-1.30">1</tspan>4-0<tspan dx="-1.85" letter-spacing="-1.30">1</tspan>-09</text><text transform="translate(1615.2,1786.0) rotate(-45)" text-anchor="end" font-family='"Liberation Sans", sans-serif' font-size="20.5" letter-spacing="0.55" fill="#585858">20<tspan dx="-1.85" letter-spacing="-1.30">1</tspan>4-0<tspan dx="-1.85" letter-spacing="-1.30">1</tspan>-23</text><text transform="translate(1653.8,1786.0) rotate(-45)" text-anchor="end" font-family='"Liberation Sans", sans-serif' font-size="20.5" letter-spacing="0.55" fill="#585858">20<tspan dx="-1.85" letter-spacing="-1.30">1</tspan>4-02-06</text><text transform="translate(1692.4,1786.0) rotate(-45)" text-anchor="end" font-family='"Liberation Sans", sans-serif' font-size="20.5" letter-spacing="0.55" fill="#585858">20<tspan dx="-1.85" letter-spacing="-1.30">1</tspan>4-02-20</text><text transform="translate(1731.0,1786.0) rotate(-45)" text-anchor="end" font-family='"Liberation Sans", sans-serif' font-size="20.5" letter-spacing="0.55" fill="#585858">20<tspan dx="-1.85" letter-spacing="-1.30">1</tspan>4-03-06</text><text transform="translate(1769.6,1786.0) rotate(-45)" text-anchor="end" font-family='"Liberation Sans", sans-serif' font-size="20.5" letter-spacing="0.55" fill="#585858">20<tspan dx="-1.85" letter-spacing="-1.30">1</tspan>4-03-20</text><text transform="translate(1808.2,1786.0) rotate(-45)" text-anchor="end" font-family='"Liberation Sans", sans-serif' font-size="20.5" letter-spacing="0.55" fill="#585858">20<tspan dx="-1.85" letter-spacing="-1.30">1</tspan>4-04-03</text><text transform="translate(1846.8,1786.0) rotate(-45)" text-anchor="end" font-family='"Liberation Sans", sans-serif' font-size="20.5" letter-spacing="0.55" fill="#585858">20<tspan dx="-1.85" letter-spacing="-1.30">1</tspan>4-04-<tspan dx="-1.85" letter-spacing="-1.30">1</tspan>7</text><text transform="translate(1885.4,1786.0) rotate(-45)" text-anchor="end" font-family='"Liberation Sans", sans-serif' font-size="20.5" letter-spacing="0.55" fill="#585858">20<tspan dx="-1.85" letter-spacing="-1.30">1</tspan>4-05-05</text><text transform="translate(1924.0,1786.0) rotate(-45)" text-anchor="end" font-family='"Liberation Sans", sans-serif' font-size="20.5" letter-spacing="0.55" fill="#585858">20<tspan dx="-1.85" letter-spacing="-1.30">1</tspan>4-05-<tspan dx="-1.85" letter-spacing="-1.30">1</tspan>9</text><text transform="translate(1962.6,1786.0) rotate(-45)" text-anchor="end" font-family='"Liberation Sans", sans-serif' font-size="20.5" letter-spacing="0.55" fill="#585858">20<tspan dx="-1.85" letter-spacing="-1.30">1</tspan>4-06-03</text><text transform="translate(2001.2,1786.0) rotate(-45)" text-anchor="end" font-family='"Liberation Sans", sans-serif' font-size="20.5" letter-spacing="0.55" fill="#585858">20<tspan dx="-1.85" letter-spacing="-1.30">1</tspan>4-06-<tspan dx="-1.85" letter-spacing="-1.30">1</tspan>8</text><text transform="translate(2039.8,1786.0) rotate(-45)" text-anchor="end" font-family='"Liberation Sans", sans-serif' font-size="20.5" letter-spacing="0.55" fill="#585858">20<tspan dx="-1.85" letter-spacing="-1.30">1</tspan>4-07-03</text><text transform="translate(2078.4,1786.0) rotate(-45)" text-anchor="end" font-family='"Liberation Sans", sans-serif' font-size="20.5" letter-spacing="0.55" fill="#585858">20<tspan dx="-1.85" letter-spacing="-1.30">1</tspan>4-07-<tspan dx="-1.85" letter-spacing="-1.30">1</tspan>7</text><text transform="translate(2117.0,1786.0) rotate(-45)" text-anchor="end" font-family='"Liberation Sans", sans-serif' font-size="20.5" letter-spacing="0.55" fill="#585858">20<tspan dx="-1.85" letter-spacing="-1.30">1</tspan>4-07-3<tspan dx="-1.85" letter-spacing="-1.30">1</tspan></text><text transform="translate(2155.6,1786.0) rotate(-45)" text-anchor="end" font-family='"Liberation Sans", sans-serif' font-size="20.5" letter-spacing="0.55" fill="#585858">20<tspan dx="-1.85" letter-spacing="-1.30">1</tspan>4-08-<tspan dx="-1.85" letter-spacing="-1.30">1</tspan>4</text><text transform="translate(2194.2,1786.0) rotate(-45)" text-anchor="end" font-family='"Liberation Sans", sans-serif' font-size="20.5" letter-spacing="0.55" fill="#585858">20<tspan dx="-1.85" letter-spacing="-1.30">1</tspan>4-08-28</text><text transform="translate(2232.8,1786.0) rotate(-45)" text-anchor="end" font-family='"Liberation Sans", sans-serif' font-size="20.5" letter-spacing="0.55" fill="#585858">20<tspan dx="-1.85" letter-spacing="-1.30">1</tspan>4-09-<tspan dx="-1.85" letter-spacing="-1.30">1</tspan><tspan dx="-1.85" letter-spacing="-1.30">1</tspan></text><text transform="translate(2271.4,1786.0) rotate(-45)" text-anchor="end" font-family='"Liberation Sans", sans-serif' font-size="20.5" letter-spacing="0.55" fill="#585858">20<tspan dx="-1.85" letter-spacing="-1.30">1</tspan>4-09-25</text><text transform="translate(2310.0,1786.0) rotate(-45)" text-anchor="end" font-family='"Liberation Sans", sans-serif' font-size="20.5" letter-spacing="0.55" fill="#585858">20<tspan dx="-1.85" letter-spacing="-1.30">1</tspan>4-<tspan dx="-1.85" letter-spacing="-1.30">1</tspan>0-<tspan dx="-1.85" letter-spacing="-1.30">1</tspan>0</text><text transform="translate(2348.6,1786.0) rotate(-45)" text-anchor="end" font-family='"Liberation Sans", sans-serif' font-size="20.5" letter-spacing="0.55" fill="#585858">20<tspan dx="-1.85" letter-spacing="-1.30">1</tspan>4-<tspan dx="-1.85" letter-spacing="-1.30">1</tspan>0-24</text><text transform="translate(2387.3,1786.0) rotate(-45)" text-anchor="end" font-family='"Liberation Sans", sans-serif' font-size="20.5" letter-spacing="0.55" fill="#585858">20<tspan dx="-1.85" letter-spacing="-1.30">1</tspan>4-<tspan dx="-1.85" letter-spacing="-1.30">1</tspan><tspan dx="-1.85" letter-spacing="-1.30">1</tspan>-07</text><text transform="translate(2425.9,1786.0) rotate(-45)" text-anchor="end" font-family='"Liberation Sans", sans-serif' font-size="20.5" letter-spacing="0.55" fill="#585858">20<tspan dx="-1.85" letter-spacing="-1.30">1</tspan>4-<tspan dx="-1.85" letter-spacing="-1.30">1</tspan><tspan dx="-1.85" letter-spacing="-1.30">1</tspan>-2<tspan dx="-1.85" letter-spacing="-1.30">1</tspan></text><text transform="translate(2464.5,1786.0) rotate(-45)" text-anchor="end" font-family='"Liberation Sans", sans-serif' font-size="20.5" letter-spacing="0.55" fill="#585858">20<tspan dx="-1.85" letter-spacing="-1.30">1</tspan>4-<tspan dx="-1.85" letter-spacing="-1.30">1</tspan>2-05</text><text transform="translate(2503.1,1786.0) rotate(-45)" text-anchor="end" font-family='"Liberation Sans", sans-serif' font-size="20.5" letter-spacing="0.55" fill="#585858">20<tspan dx="-1.85" letter-spacing="-1.30">1</tspan>4-<tspan dx="-1.85" letter-spacing="-1.30">1</tspan>2-<tspan dx="-1.85" letter-spacing="-1.30">1</tspan>9</text><text transform="translate(2541.7,1786.0) rotate(-45)" text-anchor="end" font-family='"Liberation Sans", sans-serif' font-size="20.5" letter-spacing="0.55" fill="#585858">20<tspan dx="-1.85" letter-spacing="-1.30">1</tspan>5-0<tspan dx="-1.85" letter-spacing="-1.30">1</tspan>-06</text><text transform="translate(2580.3,1786.0) rotate(-45)" text-anchor="end" font-family='"Liberation Sans", sans-serif' font-size="20.5" letter-spacing="0.55" fill="#585858">20<tspan dx="-1.85" letter-spacing="-1.30">1</tspan>5-0<tspan dx="-1.85" letter-spacing="-1.30">1</tspan>-20</text><text transform="translate(2618.9,1786.0) rotate(-45)" text-anchor="end" font-family='"Liberation Sans", sans-serif' font-size="20.5" letter-spacing="0.55" fill="#585858">20<tspan dx="-1.85" letter-spacing="-1.30">1</tspan>5-02-03</text><text transform="translate(2657.5,1786.0) rotate(-45)" text-anchor="end" font-family='"Liberation Sans", sans-serif' font-size="20.5" letter-spacing="0.55" fill="#585858">20<tspan dx="-1.85" letter-spacing="-1.30">1</tspan>5-02-<tspan dx="-1.85" letter-spacing="-1.30">1</tspan>7</text><text transform="translate(2696.1,1786.0) rotate(-45)" text-anchor="end" font-family='"Liberation Sans", sans-serif' font-size="20.5" letter-spacing="0.55" fill="#585858">20<tspan dx="-1.85" letter-spacing="-1.30">1</tspan>5-03-03</text><text transform="translate(2734.7,1786.0) rotate(-45)" text-anchor="end" font-family='"Liberation Sans", sans-serif' font-size="20.5" letter-spacing="0.55" fill="#585858">20<tspan dx="-1.85" letter-spacing="-1.30">1</tspan>5-03-<tspan dx="-1.85" letter-spacing="-1.30">1</tspan>7</text><text transform="translate(2773.3,1786.0) rotate(-45)" text-anchor="end" font-family='"Liberation Sans", sans-serif' font-size="20.5" letter-spacing="0.55" fill="#585858">20<tspan dx="-1.85" letter-spacing="-1.30">1</tspan>5-03-3<tspan dx="-1.85" letter-spacing="-1.30">1</tspan></text><text transform="translate(2811.9,1786.0) rotate(-45)" text-anchor="end" font-family='"Liberation Sans", sans-serif' font-size="20.5" letter-spacing="0.55" fill="#585858">20<tspan dx="-1.85" letter-spacing="-1.30">1</tspan>5-04-<tspan dx="-1.85" letter-spacing="-1.30">1</tspan>6</text></g><line x1="1542" y1="1085" x2="2819" y2="1085" stroke="#E2E2E4" stroke-width="2"/><line x1="1542" y1="1166.3" x2="2819" y2="1166.3" stroke="#C9D2EA" stroke-width="2"/><text x="1511.6" y="1095.7" text-anchor="end" font-family='"Liberation Sans", sans-serif' font-weight="700" font-size="17" letter-spacing="0.7" fill="#4F5377">40k</text><text x="1511.6" y="1174.6" text-anchor="end" font-family='"Liberation Sans", sans-serif' font-weight="700" font-size="17" letter-spacing="0.7" fill="#4F5377">0</text><path d="M1554.1,1113.8 L1579.6,1110.0 L1605.1,1108.0 L1630.6,1120.3 L1656.1,1105.6 L1681.6,1105.6 L1707.1,1117.4 L1732.6,1112.0 L1758.1,1113.8 L1783.6,1104.1 L1809.1,1118.0 L1834.6,1112.0 L1860.1,1118.0 L1885.6,1099.7 L1911.1,1125.6 L1936.6,1110.0 L1962.1,1123.2 L1987.6,1107.6 L2013.1,1107.6 L2038.6,1125.6 L2064.1,1110.0 L2089.6,1119.7 L2115.1,1111.5 L2140.6,1141.8 L2140.6,1166 L1554.1,1166 Z" fill="#C35457"/><polyline points="1554.1,1113.8 1579.6,1110.0 1605.1,1108.0 1630.6,1120.3 1656.1,1105.6 1681.6,1105.6 1707.1,1117.4 1732.6,1112.0 1758.1,1113.8 1783.6,1104.1 1809.1,1118.0 1834.6,1112.0 1860.1,1118.0 1885.6,1099.7 1911.1,1125.6 1936.6,1110.0 1962.1,1123.2 1987.6,1107.6 2013.1,1107.6 2038.6,1125.6 2064.1,1110.0 2089.6,1119.7 2115.1,1111.5 2140.6,1141.8" fill="none" stroke="#B01A1F" stroke-width="3.5" stroke-linejoin="round" stroke-linecap="round"/><circle cx="1554.1" cy="1113.8" r="8" fill="#B01A1F"/><circle cx="1579.6" cy="1110.0" r="8" fill="#B01A1F"/><circle cx="1605.1" cy="1108.0" r="8" fill="#B01A1F"/><circle cx="1630.6" cy="1120.3" r="8" fill="#B01A1F"/><circle cx="1656.1" cy="1105.6" r="8" fill="#B01A1F"/><circle cx="1681.6" cy="1105.6" r="8" fill="#B01A1F"/><circle cx="1707.1" cy="1117.4" r="8" fill="#B01A1F"/><circle cx="1732.6" cy="1112.0" r="8" fill="#B01A1F"/><circle cx="1758.1" cy="1113.8" r="8" fill="#B01A1F"/><circle cx="1783.6" cy="1104.1" r="8" fill="#B01A1F"/><circle cx="1809.1" cy="1118.0" r="8" fill="#B01A1F"/><circle cx="1834.6" cy="1112.0" r="8" fill="#B01A1F"/><circle cx="1860.1" cy="1118.0" r="8" fill="#B01A1F"/><circle cx="1885.6" cy="1099.7" r="8" fill="#B01A1F"/><circle cx="1911.1" cy="1125.6" r="8" fill="#B01A1F"/><circle cx="1936.6" cy="1110.0" r="8" fill="#B01A1F"/><circle cx="1962.1" cy="1123.2" r="8" fill="#B01A1F"/><circle cx="1987.6" cy="1107.6" r="8" fill="#B01A1F"/><circle cx="2013.1" cy="1107.6" r="8" fill="#B01A1F"/><circle cx="2038.6" cy="1125.6" r="8" fill="#B01A1F"/><circle cx="2064.1" cy="1110.0" r="8" fill="#B01A1F"/><circle cx="2089.6" cy="1119.7" r="8" fill="#B01A1F"/><circle cx="2115.1" cy="1111.5" r="8" fill="#B01A1F"/><circle cx="2140.6" cy="1141.8" r="8" fill="#B01A1F"/><polyline points="1554.1,1166.3 1579.6,1166.3 1605.1,1166.3 1630.6,1166.3 1656.1,1166.3 1681.6,1166.3 1707.1,1166.3 1732.6,1166.3 1758.1,1166.3 1783.6,1166.3 1809.1,1166.3 1834.6,1166.3 1860.1,1166.3 1885.6,1166.3 1911.1,1166.3 1936.6,1166.3 1962.1,1166.3 1987.6,1166.3 2013.1,1166.3 2038.6,1166.3 2064.1,1166.3 2089.6,1166.3 2115.1,1166.3 2140.6,1166.3 2166.1,1130.9 2191.6,1127.8 2217.1,1127.8 2242.6,1125.3 2268.1,1130.0 2293.6,1125.9 2319.1,1127.8 2344.6,1129.0 2370.1,1129.0 2395.6,1125.3 2421.1,1127.8 2446.6,1127.8 2472.1,1127.8 2497.6,1129.0 2523.1,1125.3 2548.6,1129.0 2574.1,1127.8 2599.6,1127.8 2625.1,1127.8 2650.6,1129.0 2676.1,1129.0 2701.6,1129.0 2727.1,1125.9 2752.6,1127.8 2778.1,1129.0 2803.6,1132.1" fill="none" stroke="#3F3FAD" stroke-width="3.5" stroke-linejoin="round" stroke-linecap="round"/><circle cx="1554.1" cy="1166.3" r="8" fill="#3F3FAD"/><circle cx="1579.6" cy="1166.3" r="8" fill="#3F3FAD"/><circle cx="1605.1" cy="1166.3" r="8" fill="#3F3FAD"/><circle cx="1630.6" cy="1166.3" r="8" fill="#3F3FAD"/><circle cx="1656.1" cy="1166.3" r="8" fill="#3F3FAD"/><circle cx="1681.6" cy="1166.3" r="8" fill="#3F3FAD"/><circle cx="1707.1" cy="1166.3" r="8" fill="#3F3FAD"/><circle cx="1732.6" cy="1166.3" r="8" fill="#3F3FAD"/><circle cx="1758.1" cy="1166.3" r="8" fill="#3F3FAD"/><circle cx="1783.6" cy="1166.3" r="8" fill="#3F3FAD"/><circle cx="1809.1" cy="1166.3" r="8" fill="#3F3FAD"/><circle cx="1834.6" cy="1166.3" r="8" fill="#3F3FAD"/><circle cx="1860.1" cy="1166.3" r="8" fill="#3F3FAD"/><circle cx="1885.6" cy="1166.3" r="8" fill="#3F3FAD"/><circle cx="1911.1" cy="1166.3" r="8" fill="#3F3FAD"/><circle cx="1936.6" cy="1166.3" r="8" fill="#3F3FAD"/><circle cx="1962.1" cy="1166.3" r="8" fill="#3F3FAD"/><circle cx="1987.6" cy="1166.3" r="8" fill="#3F3FAD"/><circle cx="2013.1" cy="1166.3" r="8" fill="#3F3FAD"/><circle cx="2038.6" cy="1166.3" r="8" fill="#3F3FAD"/><circle cx="2064.1" cy="1166.3" r="8" fill="#3F3FAD"/><circle cx="2089.6" cy="1166.3" r="8" fill="#3F3FAD"/><circle cx="2115.1" cy="1166.3" r="8" fill="#3F3FAD"/><circle cx="2140.6" cy="1166.3" r="8" fill="#3F3FAD"/><circle cx="2166.1" cy="1130.9" r="8" fill="#3F3FAD"/><circle cx="2191.6" cy="1127.8" r="8" fill="#3F3FAD"/><circle cx="2217.1" cy="1127.8" r="8" fill="#3F3FAD"/><circle cx="2242.6" cy="1125.3" r="8" fill="#3F3FAD"/><circle cx="2268.1" cy="1130.0" r="8" fill="#3F3FAD"/><circle cx="2293.6" cy="1125.9" r="8" fill="#3F3FAD"/><circle cx="2319.1" cy="1127.8" r="8" fill="#3F3FAD"/><circle cx="2344.6" cy="1129.0" r="8" fill="#3F3FAD"/><circle cx="2370.1" cy="1129.0" r="8" fill="#3F3FAD"/><circle cx="2395.6" cy="1125.3" r="8" fill="#3F3FAD"/><circle cx="2421.1" cy="1127.8" r="8" fill="#3F3FAD"/><circle cx="2446.6" cy="1127.8" r="8" fill="#3F3FAD"/><circle cx="2472.1" cy="1127.8" r="8" fill="#3F3FAD"/><circle cx="2497.6" cy="1129.0" r="8" fill="#3F3FAD"/><circle cx="2523.1" cy="1125.3" r="8" fill="#3F3FAD"/><circle cx="2548.6" cy="1129.0" r="8" fill="#3F3FAD"/><circle cx="2574.1" cy="1127.8" r="8" fill="#3F3FAD"/><circle cx="2599.6" cy="1127.8" r="8" fill="#3F3FAD"/><circle cx="2625.1" cy="1127.8" r="8" fill="#3F3FAD"/><circle cx="2650.6" cy="1129.0" r="8" fill="#3F3FAD"/><circle cx="2676.1" cy="1129.0" r="8" fill="#3F3FAD"/><circle cx="2701.6" cy="1129.0" r="8" fill="#3F3FAD"/><circle cx="2727.1" cy="1125.9" r="8" fill="#3F3FAD"/><circle cx="2752.6" cy="1127.8" r="8" fill="#3F3FAD"/><circle cx="2778.1" cy="1129.0" r="8" fill="#3F3FAD"/><circle cx="2803.6" cy="1132.1" r="8" fill="#3F3FAD"/><polyline points="1554.1,1166.3 1579.6,1166.3 1605.1,1166.3 1630.6,1166.3 1656.1,1166.3 1681.6,1166.3 1707.1,1166.3 1732.6,1166.3 1758.1,1166.3 1783.6,1166.3 1809.1,1166.3 1834.6,1166.3 1860.1,1166.3 1885.6,1166.3 1911.1,1166.3 1936.6,1166.3 1962.1,1166.3 1987.6,1166.3 2013.1,1166.3 2038.6,1166.3 2064.1,1166.3 2089.6,1166.3 2115.1,1166.3 2140.6,1166.3 2166.1,1113.5 2191.6,1116.0 2217.1,1113.5 2242.6,1111.9 2268.1,1113.5 2293.6,1113.5 2319.1,1111.3 2344.6,1113.5 2370.1,1111.9 2395.6,1111.3 2421.1,1111.9 2446.6,1116.0 2472.1,1113.5 2497.6,1113.5 2523.1,1112.9 2548.6,1111.3 2574.1,1113.5 2599.6,1113.5 2625.1,1113.5 2650.6,1113.5 2676.1,1113.5 2701.6,1113.5 2727.1,1116.0 2752.6,1113.5 2778.1,1113.5 2803.6,1113.5" fill="none" stroke="#2AA63B" stroke-width="3.5" stroke-linejoin="round" stroke-linecap="round"/><circle cx="1554.1" cy="1166.3" r="8" fill="#2AA63B"/><circle cx="1579.6" cy="1166.3" r="8" fill="#2AA63B"/><circle cx="1605.1" cy="1166.3" r="8" fill="#2AA63B"/><circle cx="1630.6" cy="1166.3" r="8" fill="#2AA63B"/><circle cx="1656.1" cy="1166.3" r="8" fill="#2AA63B"/><circle cx="1681.6" cy="1166.3" r="8" fill="#2AA63B"/><circle cx="1707.1" cy="1166.3" r="8" fill="#2AA63B"/><circle cx="1732.6" cy="1166.3" r="8" fill="#2AA63B"/><circle cx="1758.1" cy="1166.3" r="8" fill="#2AA63B"/><circle cx="1783.6" cy="1166.3" r="8" fill="#2AA63B"/><circle cx="1809.1" cy="1166.3" r="8" fill="#2AA63B"/><circle cx="1834.6" cy="1166.3" r="8" fill="#2AA63B"/><circle cx="1860.1" cy="1166.3" r="8" fill="#2AA63B"/><circle cx="1885.6" cy="1166.3" r="8" fill="#2AA63B"/><circle cx="1911.1" cy="1166.3" r="8" fill="#2AA63B"/><circle cx="1936.6" cy="1166.3" r="8" fill="#2AA63B"/><circle cx="1962.1" cy="1166.3" r="8" fill="#2AA63B"/><circle cx="1987.6" cy="1166.3" r="8" fill="#2AA63B"/><circle cx="2013.1" cy="1166.3" r="8" fill="#2AA63B"/><circle cx="2038.6" cy="1166.3" r="8" fill="#2AA63B"/><circle cx="2064.1" cy="1166.3" r="8" fill="#2AA63B"/><circle cx="2089.6" cy="1166.3" r="8" fill="#2AA63B"/><circle cx="2115.1" cy="1166.3" r="8" fill="#2AA63B"/><circle cx="2140.6" cy="1166.3" r="8" fill="#2AA63B"/><circle cx="2166.1" cy="1113.5" r="8" fill="#2AA63B"/><circle cx="2191.6" cy="1116.0" r="8" fill="#2AA63B"/><circle cx="2217.1" cy="1113.5" r="8" fill="#2AA63B"/><circle cx="2242.6" cy="1111.9" r="8" fill="#2AA63B"/><circle cx="2268.1" cy="1113.5" r="8" fill="#2AA63B"/><circle cx="2293.6" cy="1113.5" r="8" fill="#2AA63B"/><circle cx="2319.1" cy="1111.3" r="8" fill="#2AA63B"/><circle cx="2344.6" cy="1113.5" r="8" fill="#2AA63B"/><circle cx="2370.1" cy="1111.9" r="8" fill="#2AA63B"/><circle cx="2395.6" cy="1111.3" r="8" fill="#2AA63B"/><circle cx="2421.1" cy="1111.9" r="8" fill="#2AA63B"/><circle cx="2446.6" cy="1116.0" r="8" fill="#2AA63B"/><circle cx="2472.1" cy="1113.5" r="8" fill="#2AA63B"/><circle cx="2497.6" cy="1113.5" r="8" fill="#2AA63B"/><circle cx="2523.1" cy="1112.9" r="8" fill="#2AA63B"/><circle cx="2548.6" cy="1111.3" r="8" fill="#2AA63B"/><circle cx="2574.1" cy="1113.5" r="8" fill="#2AA63B"/><circle cx="2599.6" cy="1113.5" r="8" fill="#2AA63B"/><circle cx="2625.1" cy="1113.5" r="8" fill="#2AA63B"/><circle cx="2650.6" cy="1113.5" r="8" fill="#2AA63B"/><circle cx="2676.1" cy="1113.5" r="8" fill="#2AA63B"/><circle cx="2701.6" cy="1113.5" r="8" fill="#2AA63B"/><circle cx="2727.1" cy="1116.0" r="8" fill="#2AA63B"/><circle cx="2752.6" cy="1113.5" r="8" fill="#2AA63B"/><circle cx="2778.1" cy="1113.5" r="8" fill="#2AA63B"/><circle cx="2803.6" cy="1113.5" r="8" fill="#2AA63B"/><polyline points="1554.1,1166.3 1579.6,1166.3 1605.1,1166.3 1630.6,1166.3 1656.1,1166.3 1681.6,1166.3 1707.1,1166.3 1732.6,1166.3 1758.1,1166.3 1783.6,1166.3 1809.1,1166.3 1834.6,1166.3 1860.1,1166.3 1885.6,1166.3 1911.1,1166.3 1936.6,1166.3 1962.1,1166.3 1987.6,1166.3 2013.1,1166.3 2038.6,1166.3 2064.1,1166.3 2089.6,1166.3 2115.1,1166.3 2140.6,1166.3 2166.1,1098.9 2191.6,1098.9 2217.1,1098.9 2242.6,1097.3 2268.1,1097.3 2293.6,1098.9 2319.1,1097.3 2344.6,1098.9 2370.1,1097.3 2395.6,1098.9 2421.1,1101.4 2446.6,1101.4 2472.1,1098.9 2497.6,1097.3 2523.1,1097.3 2548.6,1097.3 2574.1,1101.4 2599.6,1098.9 2625.1,1098.9 2650.6,1095.1 2676.1,1101.4 2701.6,1098.9 2727.1,1101.4 2752.6,1101.4 2778.1,1101.4 2803.6,1097.3" fill="none" stroke="#00A9E8" stroke-width="3.5" stroke-linejoin="round" stroke-linecap="round"/><circle cx="1554.1" cy="1166.3" r="8" fill="#00A9E8"/><circle cx="1579.6" cy="1166.3" r="8" fill="#00A9E8"/><circle cx="1605.1" cy="1166.3" r="8" fill="#00A9E8"/><circle cx="1630.6" cy="1166.3" r="8" fill="#00A9E8"/><circle cx="1656.1" cy="1166.3" r="8" fill="#00A9E8"/><circle cx="1681.6" cy="1166.3" r="8" fill="#00A9E8"/><circle cx="1707.1" cy="1166.3" r="8" fill="#00A9E8"/><circle cx="1732.6" cy="1166.3" r="8" fill="#00A9E8"/><circle cx="1758.1" cy="1166.3" r="8" fill="#00A9E8"/><circle cx="1783.6" cy="1166.3" r="8" fill="#00A9E8"/><circle cx="1809.1" cy="1166.3" r="8" fill="#00A9E8"/><circle cx="1834.6" cy="1166.3" r="8" fill="#00A9E8"/><circle cx="1860.1" cy="1166.3" r="8" fill="#00A9E8"/><circle cx="1885.6" cy="1166.3" r="8" fill="#00A9E8"/><circle cx="1911.1" cy="1166.3" r="8" fill="#00A9E8"/><circle cx="1936.6" cy="1166.3" r="8" fill="#00A9E8"/><circle cx="1962.1" cy="1166.3" r="8" fill="#00A9E8"/><circle cx="1987.6" cy="1166.3" r="8" fill="#00A9E8"/><circle cx="2013.1" cy="1166.3" r="8" fill="#00A9E8"/><circle cx="2038.6" cy="1166.3" r="8" fill="#00A9E8"/><circle cx="2064.1" cy="1166.3" r="8" fill="#00A9E8"/><circle cx="2089.6" cy="1166.3" r="8" fill="#00A9E8"/><circle cx="2115.1" cy="1166.3" r="8" fill="#00A9E8"/><circle cx="2140.6" cy="1166.3" r="8" fill="#00A9E8"/><circle cx="2166.1" cy="1098.9" r="8" fill="#00A9E8"/><circle cx="2191.6" cy="1098.9" r="8" fill="#00A9E8"/><circle cx="2217.1" cy="1098.9" r="8" fill="#00A9E8"/><circle cx="2242.6" cy="1097.3" r="8" fill="#00A9E8"/><circle cx="2268.1" cy="1097.3" r="8" fill="#00A9E8"/><circle cx="2293.6" cy="1098.9" r="8" fill="#00A9E8"/><circle cx="2319.1" cy="1097.3" r="8" fill="#00A9E8"/><circle cx="2344.6" cy="1098.9" r="8" fill="#00A9E8"/><circle cx="2370.1" cy="1097.3" r="8" fill="#00A9E8"/><circle cx="2395.6" cy="1098.9" r="8" fill="#00A9E8"/><circle cx="2421.1" cy="1101.4" r="8" fill="#00A9E8"/><circle cx="2446.6" cy="1101.4" r="8" fill="#00A9E8"/><circle cx="2472.1" cy="1098.9" r="8" fill="#00A9E8"/><circle cx="2497.6" cy="1097.3" r="8" fill="#00A9E8"/><circle cx="2523.1" cy="1097.3" r="8" fill="#00A9E8"/><circle cx="2548.6" cy="1097.3" r="8" fill="#00A9E8"/><circle cx="2574.1" cy="1101.4" r="8" fill="#00A9E8"/><circle cx="2599.6" cy="1098.9" r="8" fill="#00A9E8"/><circle cx="2625.1" cy="1098.9" r="8" fill="#00A9E8"/><circle cx="2650.6" cy="1095.1" r="8" fill="#00A9E8"/><circle cx="2676.1" cy="1101.4" r="8" fill="#00A9E8"/><circle cx="2701.6" cy="1098.9" r="8" fill="#00A9E8"/><circle cx="2727.1" cy="1101.4" r="8" fill="#00A9E8"/><circle cx="2752.6" cy="1101.4" r="8" fill="#00A9E8"/><circle cx="2778.1" cy="1101.4" r="8" fill="#00A9E8"/><circle cx="2803.6" cy="1097.3" r="8" fill="#00A9E8"/><g><text transform="translate(1560.5,1197.0) rotate(-45)" text-anchor="end" font-family='"Liberation Sans", sans-serif' font-size="20.5" letter-spacing="0.55" fill="#585858">Week <tspan dx="-1.85" letter-spacing="-1.30">1</tspan> F...</text><text transform="translate(1611.5,1197.0) rotate(-45)" text-anchor="end" font-family='"Liberation Sans", sans-serif' font-size="20.5" letter-spacing="0.55" fill="#585858">Week 3 FY<tspan dx="-1.85" letter-spacing="-1.30">1</tspan>5</text><text transform="translate(1662.5,1197.0) rotate(-45)" text-anchor="end" font-family='"Liberation Sans", sans-serif' font-size="20.5" letter-spacing="0.55" fill="#585858">Week 5 FY<tspan dx="-1.85" letter-spacing="-1.30">1</tspan>5</text><text transform="translate(1713.5,1197.0) rotate(-45)" text-anchor="end" font-family='"Liberation Sans", sans-serif' font-size="20.5" letter-spacing="0.55" fill="#585858">Week 7 FY<tspan dx="-1.85" letter-spacing="-1.30">1</tspan>5</text><text transform="translate(1764.5,1197.0) rotate(-45)" text-anchor="end" font-family='"Liberation Sans", sans-serif' font-size="20.5" letter-spacing="0.55" fill="#585858">Week 9 FY<tspan dx="-1.85" letter-spacing="-1.30">1</tspan>5</text><text transform="translate(1815.5,1197.0) rotate(-45)" text-anchor="end" font-family='"Liberation Sans", sans-serif' font-size="20.5" letter-spacing="0.55" fill="#585858">Week <tspan dx="-1.85" letter-spacing="-1.30">1</tspan><tspan dx="-1.85" letter-spacing="-1.30">1</tspan> FY<tspan dx="-1.85" letter-spacing="-1.30">1</tspan>5</text><text transform="translate(1866.5,1197.0) rotate(-45)" text-anchor="end" font-family='"Liberation Sans", sans-serif' font-size="20.5" letter-spacing="0.55" fill="#585858">Week <tspan dx="-1.85" letter-spacing="-1.30">1</tspan>3 FY<tspan dx="-1.85" letter-spacing="-1.30">1</tspan>5</text><text transform="translate(1917.5,1197.0) rotate(-45)" text-anchor="end" font-family='"Liberation Sans", sans-serif' font-size="20.5" letter-spacing="0.55" fill="#585858">Week <tspan dx="-1.85" letter-spacing="-1.30">1</tspan>5 FY<tspan dx="-1.85" letter-spacing="-1.30">1</tspan>5</text><text transform="translate(1968.5,1197.0) rotate(-45)" text-anchor="end" font-family='"Liberation Sans", sans-serif' font-size="20.5" letter-spacing="0.55" fill="#585858">Week <tspan dx="-1.85" letter-spacing="-1.30">1</tspan>7 FY<tspan dx="-1.85" letter-spacing="-1.30">1</tspan>5</text><text transform="translate(2019.5,1197.0) rotate(-45)" text-anchor="end" font-family='"Liberation Sans", sans-serif' font-size="20.5" letter-spacing="0.55" fill="#585858">Week <tspan dx="-1.85" letter-spacing="-1.30">1</tspan>9 FY<tspan dx="-1.85" letter-spacing="-1.30">1</tspan>5</text><text transform="translate(2070.5,1197.0) rotate(-45)" text-anchor="end" font-family='"Liberation Sans", sans-serif' font-size="20.5" letter-spacing="0.55" fill="#585858">Week 2<tspan dx="-1.85" letter-spacing="-1.30">1</tspan> FY<tspan dx="-1.85" letter-spacing="-1.30">1</tspan>5</text><text transform="translate(2121.5,1197.0) rotate(-45)" text-anchor="end" font-family='"Liberation Sans", sans-serif' font-size="20.5" letter-spacing="0.55" fill="#585858">Week 23 FY<tspan dx="-1.85" letter-spacing="-1.30">1</tspan>5</text><text transform="translate(2172.5,1197.0) rotate(-45)" text-anchor="end" font-family='"Liberation Sans", sans-serif' font-size="20.5" letter-spacing="0.55" fill="#585858">Week 25 FY<tspan dx="-1.85" letter-spacing="-1.30">1</tspan>5</text><text transform="translate(2223.5,1197.0) rotate(-45)" text-anchor="end" font-family='"Liberation Sans", sans-serif' font-size="20.5" letter-spacing="0.55" fill="#585858">Week 27 FY<tspan dx="-1.85" letter-spacing="-1.30">1</tspan>5</text><text transform="translate(2274.5,1197.0) rotate(-45)" text-anchor="end" font-family='"Liberation Sans", sans-serif' font-size="20.5" letter-spacing="0.55" fill="#585858">Week 29 FY<tspan dx="-1.85" letter-spacing="-1.30">1</tspan>5</text><text transform="translate(2325.5,1197.0) rotate(-45)" text-anchor="end" font-family='"Liberation Sans", sans-serif' font-size="20.5" letter-spacing="0.55" fill="#585858">Week 3<tspan dx="-1.85" letter-spacing="-1.30">1</tspan> FY<tspan dx="-1.85" letter-spacing="-1.30">1</tspan>5</text><text transform="translate(2376.5,1197.0) rotate(-45)" text-anchor="end" font-family='"Liberation Sans", sans-serif' font-size="20.5" letter-spacing="0.55" fill="#585858">Week 33 FY<tspan dx="-1.85" letter-spacing="-1.30">1</tspan>5</text><text transform="translate(2427.5,1197.0) rotate(-45)" text-anchor="end" font-family='"Liberation Sans", sans-serif' font-size="20.5" letter-spacing="0.55" fill="#585858">Week 35 FY<tspan dx="-1.85" letter-spacing="-1.30">1</tspan>5</text><text transform="translate(2478.5,1197.0) rotate(-45)" text-anchor="end" font-family='"Liberation Sans", sans-serif' font-size="20.5" letter-spacing="0.55" fill="#585858">Week 37 FY<tspan dx="-1.85" letter-spacing="-1.30">1</tspan>5</text><text transform="translate(2529.5,1197.0) rotate(-45)" text-anchor="end" font-family='"Liberation Sans", sans-serif' font-size="20.5" letter-spacing="0.55" fill="#585858">Week 39 FY<tspan dx="-1.85" letter-spacing="-1.30">1</tspan>5</text><text transform="translate(2580.5,1197.0) rotate(-45)" text-anchor="end" font-family='"Liberation Sans", sans-serif' font-size="20.5" letter-spacing="0.55" fill="#585858">Week 4<tspan dx="-1.85" letter-spacing="-1.30">1</tspan> FY<tspan dx="-1.85" letter-spacing="-1.30">1</tspan>5</text><text transform="translate(2631.5,1197.0) rotate(-45)" text-anchor="end" font-family='"Liberation Sans", sans-serif' font-size="20.5" letter-spacing="0.55" fill="#585858">Week 43 FY<tspan dx="-1.85" letter-spacing="-1.30">1</tspan>5</text><text transform="translate(2682.5,1197.0) rotate(-45)" text-anchor="end" font-family='"Liberation Sans", sans-serif' font-size="20.5" letter-spacing="0.55" fill="#585858">Week 45 FY<tspan dx="-1.85" letter-spacing="-1.30">1</tspan>5</text><text transform="translate(2733.5,1197.0) rotate(-45)" text-anchor="end" font-family='"Liberation Sans", sans-serif' font-size="20.5" letter-spacing="0.55" fill="#585858">Week 47 FY<tspan dx="-1.85" letter-spacing="-1.30">1</tspan>5</text><text transform="translate(2784.5,1197.0) rotate(-45)" text-anchor="end" font-family='"Liberation Sans", sans-serif' font-size="20.5" letter-spacing="0.55" fill="#585858">Week 49 FY<tspan dx="-1.85" letter-spacing="-1.30">1</tspan>5</text></g><circle cx="1878" cy="1348.2" r="12" fill="#B01A1F"/><line x1="2111.5" y1="1349.6" x2="2143.5" y2="1349.6" stroke="#3F3FAD" stroke-width="3.5"/><circle cx="2127.5" cy="1349.6" r="8" fill="#3F3FAD"/><line x1="2233.2" y1="1349.6" x2="2265.2" y2="1349.6" stroke="#2AA63B" stroke-width="3.5"/><circle cx="2249.2" cy="1349.6" r="8" fill="#2AA63B"/><line x1="2355" y1="1349.6" x2="2387" y2="1349.6" stroke="#00A9E8" stroke-width="3.5"/><circle cx="2371" cy="1349.6" r="8" fill="#00A9E8"/></svg>
<div style="position:absolute;left:144.00px;top:32.60px;font-size:28px;line-height:28px;font-weight:400;color:#fff;letter-spacing:0px;white-space:nowrap;-webkit-text-stroke:0.3px #fff">Apps</div>
<div style="position:absolute;left:337.00px;top:32.60px;font-size:28px;line-height:28px;font-weight:400;color:#fff;letter-spacing:0.1px;white-space:nowrap;-webkit-text-stroke:0.3px #fff">PlanIQ Demo App</div>
<div style="position:absolute;left:690.50px;top:32.80px;font-size:28px;line-height:28px;font-weight:400;color:#fff;letter-spacing:0.1px;white-space:nowrap;-webkit-text-stroke:0.3px #fff">Seasonality / Seasonality Analysis</div>
<div style="position:absolute;left:2054.00px;top:32.60px;font-size:28px;line-height:28px;font-weight:400;color:#fff;letter-spacing:0px;white-space:nowrap;-webkit-text-stroke:0.3px #fff">Anaplan Employee Evgy</div>
<div style="position:absolute;left:2768px;top:12px;width:64px;height:64px;border:4px solid #fff;border-radius:24px;background:#475278"></div>
<div style="position:absolute;left:2782.50px;top:32.41px;font-size:30px;line-height:30px;font-weight:700;color:#fff;letter-spacing:0px;white-space:nowrap;">EK</div>
<div style="position:absolute;left:95.50px;top:135.22px;font-size:34px;line-height:34px;font-weight:700;color:#222A45;letter-spacing:-0.47px;white-space:nowrap;">Seasonality Analysis</div>
<div style="position:absolute;left:2433.50px;top:137.14px;font-size:27px;line-height:27px;font-weight:700;color:#4A5578;letter-spacing:0px;white-space:nowrap;transform:scaleX(0.72);transform-origin:left">1</div>
<div style="position:absolute;left:2550.50px;top:137.99px;font-size:26px;line-height:26px;font-weight:700;color:#3D68E3;letter-spacing:0.45px;white-space:nowrap;">Reset</div>
<div style="position:absolute;left:63.50px;top:263.40px;font-size:43px;line-height:43px;font-weight:700;color:#3E4550;letter-spacing:-1.1px;white-space:nowrap;">Seasonality and Trend Analysis</div>
<div style="position:absolute;left:2261.50px;top:312.70px;font-size:28px;line-height:28px;font-weight:700;color:#fff;letter-spacing:-0.53px;white-space:nowrap;">Update sales forecast and seasonality</div>
<div style="position:absolute;left:62.50px;top:504.26px;font-size:31px;line-height:31px;font-weight:700;color:#1F2746;letter-spacing:-0.7px;white-space:nowrap;">Historical Sales</div>
<div style="position:absolute;left:64.00px;top:984.16px;font-size:31px;line-height:31px;font-weight:700;color:#1F2746;letter-spacing:-0.7px;white-space:nowrap;">Weekly Seasonality</div>
<div style="position:absolute;left:1486.00px;top:984.16px;font-size:31px;line-height:31px;font-weight:700;color:#1F2746;letter-spacing:-0.7px;white-space:nowrap;">Forecast</div>
<div style="position:absolute;left:62.50px;top:1464.66px;font-size:31px;line-height:31px;font-weight:700;color:#1F2746;letter-spacing:-0.7px;white-space:nowrap;">Monthly Seasonality</div>
<div style="position:absolute;left:1486.00px;top:1464.36px;font-size:31px;line-height:31px;font-weight:700;color:#1F2746;letter-spacing:-0.43px;white-space:nowrap;">Quarterly Trend</div>
<div style="position:absolute;left:1904.00px;top:1338.93px;font-size:23px;line-height:23px;font-weight:700;color:#333333;letter-spacing:-0.3px;white-space:nowrap;">Historical Sales</div>
<div style="position:absolute;left:2153.00px;top:1338.93px;font-size:23px;line-height:23px;font-weight:700;color:#333333;letter-spacing:0px;white-space:nowrap;">P10</div>
<div style="position:absolute;left:2275.50px;top:1338.93px;font-size:23px;line-height:23px;font-weight:700;color:#333333;letter-spacing:1px;white-space:nowrap;">P50</div>
<div style="position:absolute;left:2397.50px;top:1338.93px;font-size:23px;line-height:23px;font-weight:700;color:#333333;letter-spacing:1px;white-space:nowrap;">P90</div>
</body></html>
